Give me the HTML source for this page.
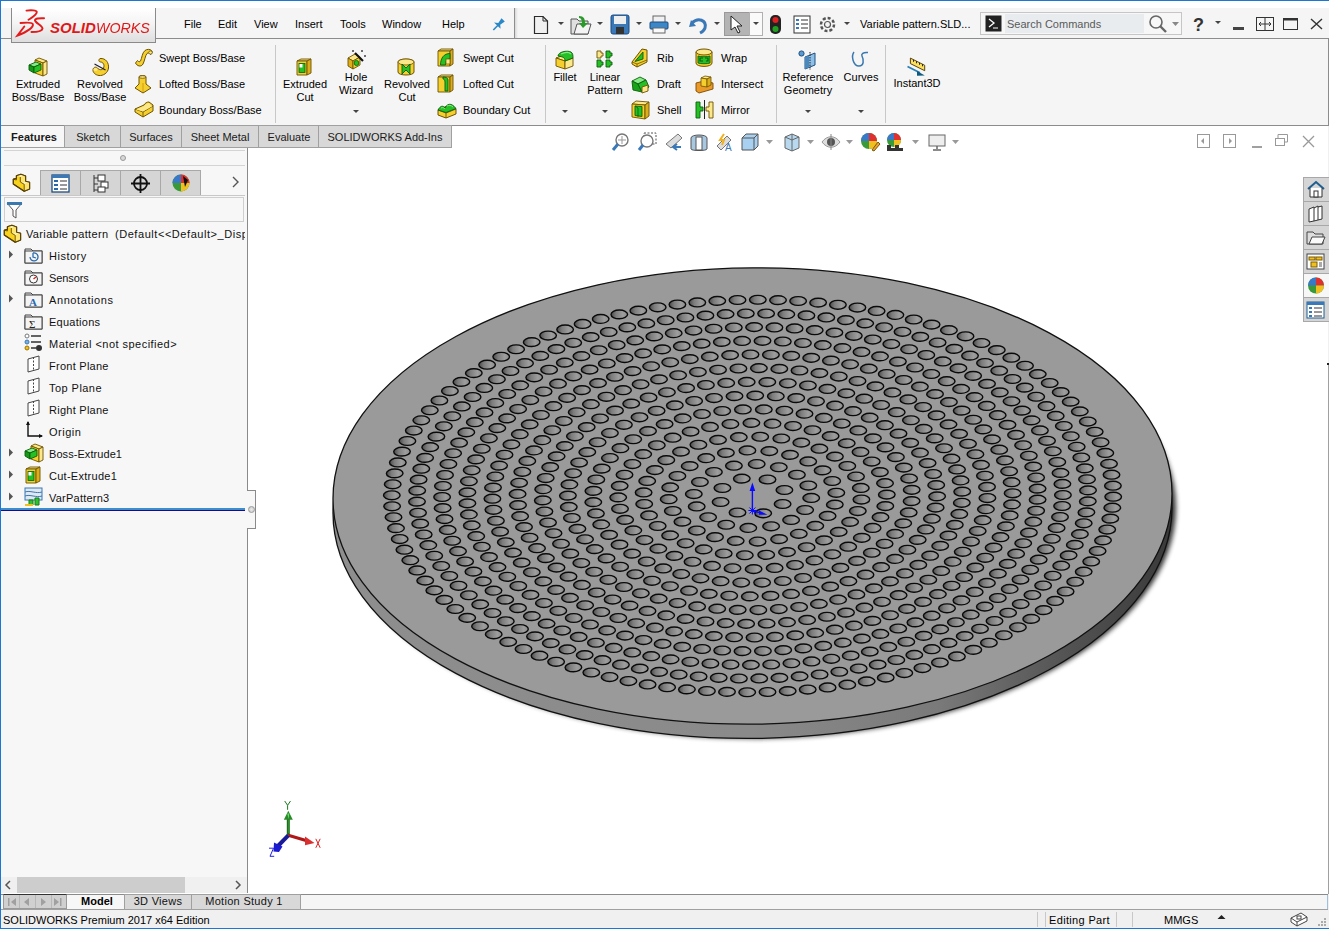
<!DOCTYPE html>
<html><head><meta charset="utf-8"><title>SOLIDWORKS</title>
<style>
html,body{margin:0;padding:0;width:1329px;height:929px;overflow:hidden;background:#f0f0f0}
.b,.t,.s{position:absolute}
.t{font-family:"Liberation Sans", sans-serif;white-space:pre;line-height:1}
.s{overflow:visible}
</style></head><body>
<div class="b" style="left:0px;top:0px;width:1329px;height:929px;background:#f0f0f0"></div><div class="b" style="left:1px;top:1px;width:1328px;height:7px;background:#ffffff"></div><div class="b" style="left:1px;top:8px;width:1328px;height:30px;background:#f5f5f5"></div><div class="b" style="left:1px;top:38px;width:1328px;height:1px;background:#8c8c8c"></div><div class="b" style="left:1px;top:39px;width:1327px;height:86px;background:#f5f5f5"></div><div class="b" style="left:1328px;top:38px;width:1px;height:88px;background:#8c8c8c"></div><div class="b" style="left:1px;top:125px;width:1328px;height:1px;background:#8c8c8c"></div><div class="b" style="left:11px;top:8px;width:145px;height:35px;background:linear-gradient(#ffffff 0%,#f4f4f4 45%,#dedede 100%);border-left:1px solid #8a8a8a;border-right:1px solid #8a8a8a;border-bottom:1px solid #8a8a8a;box-sizing:border-box"></div><div class="b" style="left:0px;top:0px;width:1329px;height:1px;background:#1a78d4"></div><div class="b" style="left:0px;top:0px;width:1px;height:929px;background:#1a78d4"></div><div class="b" style="left:0px;top:928px;width:1329px;height:1px;background:#1a78d4"></div><div class="t" style="left:184px;top:19px;font-size:11px;color:#000;font-weight:normal;letter-spacing:0px">File</div><div class="t" style="left:218px;top:19px;font-size:11px;color:#000;font-weight:normal;letter-spacing:0px">Edit</div><div class="t" style="left:254px;top:19px;font-size:11px;color:#000;font-weight:normal;letter-spacing:0px">View</div><div class="t" style="left:295px;top:19px;font-size:11px;color:#000;font-weight:normal;letter-spacing:0px">Insert</div><div class="t" style="left:340px;top:19px;font-size:11px;color:#000;font-weight:normal;letter-spacing:0px">Tools</div><div class="t" style="left:382px;top:19px;font-size:11px;color:#000;font-weight:normal;letter-spacing:0px">Window</div><div class="t" style="left:442px;top:19px;font-size:11px;color:#000;font-weight:normal;letter-spacing:0px">Help</div><div class="b" style="left:514px;top:8px;width:1px;height:30px;background:#8e8e8e"></div><div class="b" style="left:515px;top:8px;width:3px;height:30px;background:linear-gradient(90deg,#d8d8d8,#f5f5f5)"></div><div class="t" style="left:860px;top:19px;font-size:11px;color:#000;font-weight:normal;letter-spacing:0px">Variable pattern.SLD...</div><div class="b" style="left:980px;top:12px;width:202px;height:23px;background:#f7f7f7;border:1px solid #c6c6c6;box-sizing:border-box"></div><div class="b" style="left:1005px;top:14px;width:139px;height:19px;background:#e9ecef"></div><div class="t" style="left:1007px;top:19px;font-size:11px;color:#5a5a5a;font-weight:normal;letter-spacing:0px">Search Commands</div><div class="b" style="left:1px;top:126px;width:1327px;height:22px;background:#ffffff"></div><div class="b" style="left:1px;top:126px;width:64px;height:21px;background:#f7f7f7"></div><div class="b" style="left:64px;top:125px;width:57px;height:23px;background:#d8d8d8;border:1px solid #a0a0a0;box-sizing:border-box"></div><div class="t" style="left:-57px;top:132px;width:300px;text-align:center;font-size:11px;color:#1a1a1a;font-weight:normal;letter-spacing:0px">Sketch</div><div class="b" style="left:120px;top:125px;width:62px;height:23px;background:#d8d8d8;border:1px solid #a0a0a0;box-sizing:border-box"></div><div class="t" style="left:1px;top:132px;width:300px;text-align:center;font-size:11px;color:#1a1a1a;font-weight:normal;letter-spacing:0px">Surfaces</div><div class="b" style="left:181px;top:125px;width:78px;height:23px;background:#d8d8d8;border:1px solid #a0a0a0;box-sizing:border-box"></div><div class="t" style="left:70px;top:132px;width:300px;text-align:center;font-size:11px;color:#1a1a1a;font-weight:normal;letter-spacing:0px">Sheet Metal</div><div class="b" style="left:258px;top:125px;width:61px;height:23px;background:#d8d8d8;border:1px solid #a0a0a0;box-sizing:border-box"></div><div class="t" style="left:139px;top:132px;width:300px;text-align:center;font-size:11px;color:#1a1a1a;font-weight:normal;letter-spacing:0px">Evaluate</div><div class="b" style="left:318px;top:125px;width:134px;height:23px;background:#d8d8d8;border:1px solid #a0a0a0;box-sizing:border-box"></div><div class="t" style="left:235px;top:132px;width:300px;text-align:center;font-size:11px;color:#1a1a1a;font-weight:normal;letter-spacing:0px">SOLIDWORKS Add-Ins</div><div class="t" style="left:-116px;top:132px;width:300px;text-align:center;font-size:11px;color:#1a1a1a;font-weight:bold;letter-spacing:0px">Features</div><div class="b" style="left:1px;top:147px;width:64px;height:1px;background:#a0a0a0"></div><div class="b" style="left:248px;top:148px;width:1080px;height:746px;background:#ffffff"></div><div class="b" style="left:1328px;top:363px;width:1px;height:531px;background:#a0a0a0"></div><div class="b" style="left:1327px;top:363px;width:2px;height:2px;background:#222"></div><div class="b" style="left:1px;top:148px;width:246px;height:745px;background:#f7f7f7"></div><div class="b" style="left:247px;top:148px;width:1px;height:745px;background:#8a8a8a"></div><div class="b" style="left:4px;top:150px;width:241px;height:1px;background:#d4d4d4"></div><div class="b" style="left:4px;top:165px;width:241px;height:1px;background:#d4d4d4"></div><div class="b" style="left:120px;top:155px;width:6px;height:6px;border-radius:50%;background:#d8d8d8;border:1px solid #9a9a9a;box-sizing:border-box"></div><div class="b" style="left:1px;top:170px;width:40px;height:26px;background:#f7f7f7"></div><div class="b" style="left:40px;top:170px;width:41px;height:26px;background:#d5d5d5;border:1px solid #a8a8a8;box-sizing:border-box"></div><div class="b" style="left:80px;top:170px;width:41px;height:26px;background:#d5d5d5;border:1px solid #a8a8a8;box-sizing:border-box"></div><div class="b" style="left:120px;top:170px;width:41px;height:26px;background:#d5d5d5;border:1px solid #a8a8a8;box-sizing:border-box"></div><div class="b" style="left:160px;top:170px;width:41px;height:26px;background:#d5d5d5;border:1px solid #a8a8a8;box-sizing:border-box"></div><div class="b" style="left:1px;top:195px;width:244px;height:1px;background:#c8c8c8"></div><div class="b" style="left:201px;top:195px;width:44px;height:1px;background:#c8c8c8"></div><svg class="s" style="left:230px;top:175px" width="12" height="14" viewBox="0 0 12 14"><path d="M3 2 L8 7 L3 12" fill="none" stroke="#555" stroke-width="1.4"/></svg><div class="b" style="left:4px;top:197px;width:240px;height:25px;background:#f7f7f7;border:1px solid #cfcfcf;box-sizing:border-box"></div><svg class="s" style="left:6px;top:201px" width="18" height="18" viewBox="0 0 18 18"><path d="M1 2 H16 L10 9 V17 L7 15 V9 Z" fill="#fff" stroke="#555" stroke-width="1"/><rect x="1" y="1" width="15" height="3" fill="#3a78b0"/></svg><div class="t" style="left:26px;top:229px;font-size:11px;color:#111;font-weight:normal;letter-spacing:0.35px">Variable pattern</div><div style="position:absolute;left:115px;top:224px;width:130px;height:20px;overflow:hidden"><div class="t" style="left:0px;top:5px;font-size:11px;color:#111;font-weight:normal;letter-spacing:0.55px">(Default&lt;&lt;Default&gt;_Disp</div></div><div class="t" style="left:49px;top:251px;font-size:11px;color:#111;font-weight:normal;letter-spacing:0.5px">History</div><svg class="s" style="left:8px;top:250px" width="6" height="9" viewBox="0 0 6 9"><path d="M1 0.5 L5 4.5 L1 8.5 Z" fill="#555"/></svg><div class="t" style="left:49px;top:273px;font-size:11px;color:#111;font-weight:normal;letter-spacing:-0.1px">Sensors</div><div class="t" style="left:49px;top:295px;font-size:11px;color:#111;font-weight:normal;letter-spacing:0.59px">Annotations</div><svg class="s" style="left:8px;top:294px" width="6" height="9" viewBox="0 0 6 9"><path d="M1 0.5 L5 4.5 L1 8.5 Z" fill="#555"/></svg><div class="t" style="left:49px;top:317px;font-size:11px;color:#111;font-weight:normal;letter-spacing:0.26px">Equations</div><div class="t" style="left:49px;top:339px;font-size:11px;color:#111;font-weight:normal;letter-spacing:0.47px">Material &lt;not specified&gt;</div><div class="t" style="left:49px;top:361px;font-size:11px;color:#111;font-weight:normal;letter-spacing:0.26px">Front Plane</div><div class="t" style="left:49px;top:383px;font-size:11px;color:#111;font-weight:normal;letter-spacing:0.45px">Top Plane</div><div class="t" style="left:49px;top:405px;font-size:11px;color:#111;font-weight:normal;letter-spacing:0.26px">Right Plane</div><div class="t" style="left:49px;top:427px;font-size:11px;color:#111;font-weight:normal;letter-spacing:0.51px">Origin</div><div class="t" style="left:49px;top:449px;font-size:11px;color:#111;font-weight:normal;letter-spacing:0.07px">Boss-Extrude1</div><svg class="s" style="left:8px;top:448px" width="6" height="9" viewBox="0 0 6 9"><path d="M1 0.5 L5 4.5 L1 8.5 Z" fill="#555"/></svg><div class="t" style="left:49px;top:471px;font-size:11px;color:#111;font-weight:normal;letter-spacing:0.27px">Cut-Extrude1</div><svg class="s" style="left:8px;top:470px" width="6" height="9" viewBox="0 0 6 9"><path d="M1 0.5 L5 4.5 L1 8.5 Z" fill="#555"/></svg><div class="t" style="left:49px;top:493px;font-size:11px;color:#111;font-weight:normal;letter-spacing:0.23px">VarPattern3</div><svg class="s" style="left:8px;top:492px" width="6" height="9" viewBox="0 0 6 9"><path d="M1 0.5 L5 4.5 L1 8.5 Z" fill="#555"/></svg><div class="b" style="left:1px;top:508px;width:244px;height:2px;background:#3a8ed0"></div><div class="b" style="left:1px;top:510px;width:244px;height:1px;background:#1a0a8c"></div><div class="b" style="left:247px;top:490px;width:1px;height:39px;background:#f7f7f7"></div><div class="b" style="left:248px;top:490px;width:8px;height:39px;background:#f7f7f7"></div><div class="b" style="left:247px;top:490px;width:9px;height:1px;background:#8a8a8a"></div><div class="b" style="left:247px;top:528px;width:9px;height:1px;background:#8a8a8a"></div><div class="b" style="left:255px;top:490px;width:1px;height:39px;background:#8a8a8a"></div><div class="b" style="left:248px;top:506px;width:7px;height:7px;border-radius:50%;background:radial-gradient(#e8e8e8,#c8c8c8);border:1px solid #999;box-sizing:border-box"></div><div class="b" style="left:1px;top:877px;width:246px;height:16px;background:#f0f0f0"></div><div class="b" style="left:17px;top:877px;width:168px;height:16px;background:#cdcdcd"></div><svg class="s" style="left:3px;top:879px" width="10" height="12" viewBox="0 0 10 12"><path d="M7 2 L3 6 L7 10" fill="none" stroke="#555" stroke-width="1.5"/></svg><svg class="s" style="left:233px;top:879px" width="10" height="12" viewBox="0 0 10 12"><path d="M3 2 L7 6 L3 10" fill="none" stroke="#555" stroke-width="1.5"/></svg><div class="b" style="left:1px;top:893px;width:1327px;height:1px;background:#ffffff"></div><div class="b" style="left:1px;top:894px;width:1327px;height:15px;background:#f5f5f5"></div><div class="b" style="left:1px;top:894px;width:1327px;height:1px;background:#8a8a8a"></div><div class="b" style="left:1px;top:909px;width:1327px;height:1px;background:#a0a0a0"></div><div class="b" style="left:1327px;top:895px;width:1px;height:14px;background:#9ec0e0"></div><div class="b" style="left:3px;top:894px;width:64px;height:15px;background:#d0d0d0;border:1px solid #9a9a9a;border-top:1px solid #333;box-sizing:border-box"></div><div class="b" style="left:19px;top:895px;width:1px;height:13px;background:#b8b8b8"></div><div class="b" style="left:35px;top:895px;width:1px;height:13px;background:#b8b8b8"></div><div class="b" style="left:51px;top:895px;width:1px;height:13px;background:#b8b8b8"></div><svg class="s" style="left:3px;top:894px" width="64" height="15" viewBox="0 0 64 15"><g fill="#a0a0a0"><rect x="5" y="4" width="1.5" height="8"/><path d="M13 4 L8 8 L13 12 Z"/><path d="M26 4 L21 8 L26 12 Z"/><path d="M38 4 L43 8 L38 12 Z"/><path d="M51 4 L56 8 L51 12 Z"/><rect x="57" y="4" width="1.5" height="8"/></g></svg><div class="b" style="left:67px;top:895px;width:57px;height:14px;background:#f7f7f7"></div><div class="t" style="left:-53px;top:896px;width:300px;text-align:center;font-size:11px;color:#000;font-weight:bold;letter-spacing:0px">Model</div><div class="b" style="left:124px;top:894px;width:68px;height:16px;background:#d8d8d8;border:1px solid #a0a0a0;box-sizing:border-box"></div><div class="t" style="left:8px;top:896px;width:300px;text-align:center;font-size:11px;color:#111;font-weight:normal;letter-spacing:0.3px">3D Views</div><div class="b" style="left:191px;top:894px;width:110px;height:16px;background:#d8d8d8;border:1px solid #a0a0a0;box-sizing:border-box"></div><div class="t" style="left:94px;top:896px;width:300px;text-align:center;font-size:11px;color:#111;font-weight:normal;letter-spacing:0.3px">Motion Study 1</div><div class="b" style="left:1px;top:910px;width:1328px;height:18px;background:#f0f0f0"></div><div class="t" style="left:3px;top:915px;font-size:11px;color:#000;font-weight:normal;letter-spacing:0px">SOLIDWORKS Premium 2017 x64 Edition</div><div class="b" style="left:1037px;top:912px;width:1px;height:15px;background:#c8c8c8"></div><div class="b" style="left:1045px;top:912px;width:1px;height:15px;background:#c8c8c8"></div><div class="b" style="left:1116px;top:912px;width:1px;height:15px;background:#c8c8c8"></div><div class="b" style="left:1132px;top:912px;width:1px;height:15px;background:#c8c8c8"></div><div class="t" style="left:1049px;top:915px;font-size:11px;color:#000;font-weight:normal;letter-spacing:0.34px">Editing Part</div><div class="t" style="left:1164px;top:915px;font-size:11px;color:#000;font-weight:normal;letter-spacing:0px">MMGS</div><svg class="s" style="left:1217px;top:914px" width="9" height="6" viewBox="0 0 9 6"><path d="M0.5 5 L4.5 1 L8.5 5 Z" fill="#222"/></svg><svg class="s" style="left:0;top:0" width="1329" height="929" viewBox="0 0 1329 929"><g transform="matrix(1,-0.0061,0,1,0,4.590)"><defs><linearGradient id="side" x1="0" x2="1" y1="0" y2="0"><stop offset="0" stop-color="#8e8e8e"/><stop offset="0.5" stop-color="#8a8a8a"/><stop offset="0.72" stop-color="#7a7a7a"/><stop offset="0.88" stop-color="#525252"/><stop offset="1" stop-color="#3a3a3a"/></linearGradient><linearGradient id="hg" x1="0" x2="1" y1="0" y2="0"><stop offset="0" stop-color="#484848"/><stop offset="0.3" stop-color="#7c7c7c"/><stop offset="0.72" stop-color="#9e9e9e"/><stop offset="1" stop-color="#8a8a8a"/></linearGradient><filter id="blur" x="-10%" y="-10%" width="120%" height="120%"><feGaussianBlur stdDeviation="2.5"/></filter><ellipse id="h" cx="0" cy="0" rx="8.3" ry="4.4" fill="url(#hg)" stroke="#0a0a0a" stroke-width="1.4"/></defs><ellipse cx="756.5" cy="510.2" rx="419.5" ry="228.2" fill="#000" opacity="0.8" filter="url(#blur)"/><ellipse cx="752.5" cy="510.2" rx="419.5" ry="228.2" fill="url(#side)" stroke="#111" stroke-width="1.3"/><ellipse cx="752.5" cy="496.0" rx="419.5" ry="228.2" fill="#9a9a9a" stroke="#111" stroke-width="1.3"/><use href="#h" x="782.6" y="504.2"/><use href="#h" x="763.2" y="513.4"/><use href="#h" x="737.5" y="512.4"/><use href="#h" x="720.6" y="501.8"/><use href="#h" x="722.4" y="487.8"/><use href="#h" x="741.8" y="478.6"/><use href="#h" x="767.5" y="479.6"/><use href="#h" x="784.4" y="490.2"/><use href="#h" x="805.1" y="510.3"/><use href="#h" x="791.1" y="520.2"/><use href="#h" x="771.1" y="526.4"/><use href="#h" x="748.3" y="527.9"/><use href="#h" x="726.2" y="524.6"/><use href="#h" x="708.1" y="517.0"/><use href="#h" x="696.7" y="506.1"/><use href="#h" x="693.8" y="493.7"/><use href="#h" x="699.9" y="481.7"/><use href="#h" x="713.9" y="471.8"/><use href="#h" x="733.9" y="465.6"/><use href="#h" x="756.7" y="464.1"/><use href="#h" x="778.8" y="467.4"/><use href="#h" x="796.9" y="475.0"/><use href="#h" x="808.3" y="485.9"/><use href="#h" x="811.2" y="498.3"/><use href="#h" x="827.6" y="516.4"/><use href="#h" x="815.3" y="526.3"/><use href="#h" x="798.8" y="534.1"/><use href="#h" x="779.1" y="539.3"/><use href="#h" x="757.6" y="541.6"/><use href="#h" x="735.7" y="540.8"/><use href="#h" x="715.0" y="536.9"/><use href="#h" x="696.8" y="530.2"/><use href="#h" x="682.4" y="521.2"/><use href="#h" x="672.8" y="510.5"/><use href="#h" x="668.7" y="498.7"/><use href="#h" x="670.2" y="486.9"/><use href="#h" x="677.4" y="475.6"/><use href="#h" x="689.7" y="465.7"/><use href="#h" x="706.2" y="457.9"/><use href="#h" x="725.9" y="452.7"/><use href="#h" x="747.4" y="450.4"/><use href="#h" x="769.3" y="451.2"/><use href="#h" x="790.0" y="455.1"/><use href="#h" x="808.2" y="461.8"/><use href="#h" x="822.6" y="470.8"/><use href="#h" x="832.2" y="481.5"/><use href="#h" x="836.3" y="493.3"/><use href="#h" x="834.8" y="505.1"/><use href="#h" x="850.1" y="522.5"/><use href="#h" x="838.7" y="532.4"/><use href="#h" x="824.0" y="540.8"/><use href="#h" x="806.6" y="547.6"/><use href="#h" x="787.0" y="552.3"/><use href="#h" x="766.2" y="554.9"/><use href="#h" x="744.8" y="555.2"/><use href="#h" x="723.7" y="553.3"/><use href="#h" x="703.7" y="549.1"/><use href="#h" x="685.6" y="542.9"/><use href="#h" x="670.1" y="534.9"/><use href="#h" x="657.7" y="525.4"/><use href="#h" x="649.0" y="514.8"/><use href="#h" x="644.2" y="503.4"/><use href="#h" x="643.6" y="491.8"/><use href="#h" x="647.2" y="480.3"/><use href="#h" x="654.9" y="469.5"/><use href="#h" x="666.3" y="459.6"/><use href="#h" x="681.0" y="451.2"/><use href="#h" x="698.4" y="444.4"/><use href="#h" x="718.0" y="439.7"/><use href="#h" x="738.8" y="437.1"/><use href="#h" x="760.2" y="436.8"/><use href="#h" x="781.3" y="438.7"/><use href="#h" x="801.3" y="442.9"/><use href="#h" x="819.4" y="449.1"/><use href="#h" x="834.9" y="457.1"/><use href="#h" x="847.3" y="466.6"/><use href="#h" x="856.0" y="477.2"/><use href="#h" x="860.8" y="488.6"/><use href="#h" x="861.4" y="500.2"/><use href="#h" x="857.8" y="511.7"/><use href="#h" x="872.6" y="528.7"/><use href="#h" x="861.8" y="538.5"/><use href="#h" x="848.2" y="547.3"/><use href="#h" x="832.3" y="554.8"/><use href="#h" x="814.4" y="560.8"/><use href="#h" x="795.0" y="565.3"/><use href="#h" x="774.6" y="568.1"/><use href="#h" x="753.6" y="569.1"/><use href="#h" x="732.5" y="568.2"/><use href="#h" x="712.0" y="565.7"/><use href="#h" x="692.5" y="561.4"/><use href="#h" x="674.4" y="555.4"/><use href="#h" x="658.3" y="548.1"/><use href="#h" x="644.5" y="539.4"/><use href="#h" x="633.3" y="529.7"/><use href="#h" x="625.1" y="519.1"/><use href="#h" x="620.0" y="508.0"/><use href="#h" x="618.2" y="496.6"/><use href="#h" x="619.7" y="485.1"/><use href="#h" x="624.5" y="474.0"/><use href="#h" x="632.4" y="463.3"/><use href="#h" x="643.2" y="453.5"/><use href="#h" x="656.8" y="444.7"/><use href="#h" x="672.7" y="437.2"/><use href="#h" x="690.6" y="431.2"/><use href="#h" x="710.0" y="426.7"/><use href="#h" x="730.4" y="423.9"/><use href="#h" x="751.4" y="422.9"/><use href="#h" x="772.5" y="423.8"/><use href="#h" x="793.0" y="426.3"/><use href="#h" x="812.5" y="430.6"/><use href="#h" x="830.6" y="436.6"/><use href="#h" x="846.7" y="443.9"/><use href="#h" x="860.5" y="452.6"/><use href="#h" x="871.7" y="462.3"/><use href="#h" x="879.9" y="472.9"/><use href="#h" x="885.0" y="484.0"/><use href="#h" x="886.8" y="495.4"/><use href="#h" x="885.3" y="506.9"/><use href="#h" x="880.5" y="518.0"/><use href="#h" x="895.1" y="534.8"/><use href="#h" x="884.6" y="544.6"/><use href="#h" x="871.8" y="553.5"/><use href="#h" x="857.0" y="561.5"/><use href="#h" x="840.4" y="568.4"/><use href="#h" x="822.3" y="574.0"/><use href="#h" x="803.0" y="578.3"/><use href="#h" x="782.8" y="581.2"/><use href="#h" x="762.1" y="582.6"/><use href="#h" x="741.2" y="582.5"/><use href="#h" x="720.6" y="581.0"/><use href="#h" x="700.5" y="578.0"/><use href="#h" x="681.2" y="573.6"/><use href="#h" x="663.2" y="567.9"/><use href="#h" x="646.7" y="560.9"/><use href="#h" x="632.1" y="552.9"/><use href="#h" x="619.5" y="543.8"/><use href="#h" x="609.1" y="534.0"/><use href="#h" x="601.2" y="523.5"/><use href="#h" x="595.9" y="512.5"/><use href="#h" x="593.3" y="501.2"/><use href="#h" x="593.4" y="489.9"/><use href="#h" x="596.3" y="478.6"/><use href="#h" x="601.8" y="467.7"/><use href="#h" x="609.9" y="457.2"/><use href="#h" x="620.4" y="447.4"/><use href="#h" x="633.2" y="438.5"/><use href="#h" x="648.0" y="430.5"/><use href="#h" x="664.6" y="423.6"/><use href="#h" x="682.7" y="418.0"/><use href="#h" x="702.0" y="413.7"/><use href="#h" x="722.2" y="410.8"/><use href="#h" x="742.9" y="409.4"/><use href="#h" x="763.8" y="409.5"/><use href="#h" x="784.4" y="411.0"/><use href="#h" x="804.5" y="414.0"/><use href="#h" x="823.8" y="418.4"/><use href="#h" x="841.8" y="424.1"/><use href="#h" x="858.3" y="431.1"/><use href="#h" x="872.9" y="439.1"/><use href="#h" x="885.5" y="448.2"/><use href="#h" x="895.9" y="458.0"/><use href="#h" x="903.8" y="468.5"/><use href="#h" x="909.1" y="479.5"/><use href="#h" x="911.7" y="490.8"/><use href="#h" x="911.6" y="502.1"/><use href="#h" x="908.7" y="513.4"/><use href="#h" x="903.2" y="524.3"/><use href="#h" x="917.7" y="540.9"/><use href="#h" x="907.4" y="550.7"/><use href="#h" x="895.1" y="559.8"/><use href="#h" x="881.1" y="568.0"/><use href="#h" x="865.5" y="575.4"/><use href="#h" x="848.4" y="581.8"/><use href="#h" x="830.2" y="587.1"/><use href="#h" x="810.9" y="591.3"/><use href="#h" x="791.0" y="594.2"/><use href="#h" x="770.5" y="596.0"/><use href="#h" x="749.8" y="596.4"/><use href="#h" x="729.2" y="595.6"/><use href="#h" x="708.8" y="593.6"/><use href="#h" x="689.0" y="590.3"/><use href="#h" x="670.0" y="585.8"/><use href="#h" x="652.0" y="580.2"/><use href="#h" x="635.3" y="573.6"/><use href="#h" x="620.1" y="566.0"/><use href="#h" x="606.5" y="557.5"/><use href="#h" x="594.8" y="548.2"/><use href="#h" x="585.0" y="538.3"/><use href="#h" x="577.4" y="527.8"/><use href="#h" x="571.9" y="516.9"/><use href="#h" x="568.8" y="505.8"/><use href="#h" x="567.9" y="494.5"/><use href="#h" x="569.4" y="483.3"/><use href="#h" x="573.1" y="472.2"/><use href="#h" x="579.1" y="461.5"/><use href="#h" x="587.3" y="451.1"/><use href="#h" x="597.6" y="441.3"/><use href="#h" x="609.9" y="432.2"/><use href="#h" x="623.9" y="424.0"/><use href="#h" x="639.5" y="416.6"/><use href="#h" x="656.6" y="410.2"/><use href="#h" x="674.8" y="404.9"/><use href="#h" x="694.1" y="400.7"/><use href="#h" x="714.0" y="397.8"/><use href="#h" x="734.5" y="396.0"/><use href="#h" x="755.2" y="395.6"/><use href="#h" x="775.8" y="396.4"/><use href="#h" x="796.2" y="398.4"/><use href="#h" x="816.0" y="401.7"/><use href="#h" x="835.0" y="406.2"/><use href="#h" x="853.0" y="411.8"/><use href="#h" x="869.7" y="418.4"/><use href="#h" x="884.9" y="426.0"/><use href="#h" x="898.5" y="434.5"/><use href="#h" x="910.2" y="443.8"/><use href="#h" x="920.0" y="453.7"/><use href="#h" x="927.6" y="464.2"/><use href="#h" x="933.1" y="475.1"/><use href="#h" x="936.2" y="486.2"/><use href="#h" x="937.1" y="497.5"/><use href="#h" x="935.6" y="508.7"/><use href="#h" x="931.9" y="519.8"/><use href="#h" x="925.9" y="530.5"/><use href="#h" x="940.2" y="547.0"/><use href="#h" x="930.1" y="556.8"/><use href="#h" x="918.3" y="565.9"/><use href="#h" x="904.9" y="574.4"/><use href="#h" x="890.0" y="582.2"/><use href="#h" x="873.8" y="589.1"/><use href="#h" x="856.4" y="595.1"/><use href="#h" x="838.1" y="600.2"/><use href="#h" x="818.9" y="604.3"/><use href="#h" x="799.1" y="607.3"/><use href="#h" x="778.8" y="609.2"/><use href="#h" x="758.3" y="610.1"/><use href="#h" x="737.7" y="609.8"/><use href="#h" x="717.2" y="608.5"/><use href="#h" x="697.1" y="606.1"/><use href="#h" x="677.6" y="602.6"/><use href="#h" x="658.7" y="598.1"/><use href="#h" x="640.8" y="592.6"/><use href="#h" x="623.9" y="586.2"/><use href="#h" x="608.3" y="578.9"/><use href="#h" x="594.1" y="570.8"/><use href="#h" x="581.3" y="562.0"/><use href="#h" x="570.3" y="552.5"/><use href="#h" x="561.0" y="542.6"/><use href="#h" x="553.5" y="532.1"/><use href="#h" x="548.0" y="521.3"/><use href="#h" x="544.4" y="510.3"/><use href="#h" x="542.8" y="499.1"/><use href="#h" x="543.2" y="487.9"/><use href="#h" x="545.7" y="476.8"/><use href="#h" x="550.2" y="465.9"/><use href="#h" x="556.6" y="455.2"/><use href="#h" x="564.8" y="445.0"/><use href="#h" x="574.9" y="435.2"/><use href="#h" x="586.7" y="426.1"/><use href="#h" x="600.1" y="417.6"/><use href="#h" x="615.0" y="409.8"/><use href="#h" x="631.2" y="402.9"/><use href="#h" x="648.6" y="396.9"/><use href="#h" x="666.9" y="391.8"/><use href="#h" x="686.1" y="387.7"/><use href="#h" x="705.9" y="384.7"/><use href="#h" x="726.2" y="382.8"/><use href="#h" x="746.7" y="381.9"/><use href="#h" x="767.3" y="382.2"/><use href="#h" x="787.8" y="383.5"/><use href="#h" x="807.9" y="385.9"/><use href="#h" x="827.4" y="389.4"/><use href="#h" x="846.3" y="393.9"/><use href="#h" x="864.2" y="399.4"/><use href="#h" x="881.1" y="405.8"/><use href="#h" x="896.7" y="413.1"/><use href="#h" x="910.9" y="421.2"/><use href="#h" x="923.7" y="430.0"/><use href="#h" x="934.7" y="439.5"/><use href="#h" x="944.0" y="449.4"/><use href="#h" x="951.5" y="459.9"/><use href="#h" x="957.0" y="470.7"/><use href="#h" x="960.6" y="481.7"/><use href="#h" x="962.2" y="492.9"/><use href="#h" x="961.8" y="504.1"/><use href="#h" x="959.3" y="515.2"/><use href="#h" x="954.8" y="526.1"/><use href="#h" x="948.4" y="536.8"/><use href="#h" x="962.7" y="553.1"/><use href="#h" x="952.7" y="562.9"/><use href="#h" x="941.2" y="572.1"/><use href="#h" x="928.3" y="580.8"/><use href="#h" x="914.1" y="588.8"/><use href="#h" x="898.6" y="596.1"/><use href="#h" x="882.0" y="602.6"/><use href="#h" x="864.4" y="608.4"/><use href="#h" x="846.0" y="613.2"/><use href="#h" x="826.9" y="617.2"/><use href="#h" x="807.1" y="620.3"/><use href="#h" x="787.0" y="622.4"/><use href="#h" x="766.6" y="623.6"/><use href="#h" x="746.1" y="623.8"/><use href="#h" x="725.7" y="623.0"/><use href="#h" x="705.5" y="621.2"/><use href="#h" x="685.6" y="618.5"/><use href="#h" x="666.2" y="614.9"/><use href="#h" x="647.5" y="610.3"/><use href="#h" x="629.6" y="604.9"/><use href="#h" x="612.6" y="598.7"/><use href="#h" x="596.7" y="591.6"/><use href="#h" x="581.9" y="583.9"/><use href="#h" x="568.5" y="575.5"/><use href="#h" x="556.5" y="566.4"/><use href="#h" x="545.9" y="556.9"/><use href="#h" x="537.0" y="546.9"/><use href="#h" x="529.6" y="536.4"/><use href="#h" x="524.0" y="525.7"/><use href="#h" x="520.1" y="514.8"/><use href="#h" x="518.0" y="503.7"/><use href="#h" x="517.6" y="492.5"/><use href="#h" x="519.1" y="481.4"/><use href="#h" x="522.3" y="470.4"/><use href="#h" x="527.3" y="459.6"/><use href="#h" x="534.0" y="449.1"/><use href="#h" x="542.3" y="438.9"/><use href="#h" x="552.3" y="429.1"/><use href="#h" x="563.8" y="419.9"/><use href="#h" x="576.7" y="411.2"/><use href="#h" x="590.9" y="403.2"/><use href="#h" x="606.4" y="395.9"/><use href="#h" x="623.0" y="389.4"/><use href="#h" x="640.6" y="383.6"/><use href="#h" x="659.0" y="378.8"/><use href="#h" x="678.1" y="374.8"/><use href="#h" x="697.9" y="371.7"/><use href="#h" x="718.0" y="369.6"/><use href="#h" x="738.4" y="368.4"/><use href="#h" x="758.9" y="368.2"/><use href="#h" x="779.3" y="369.0"/><use href="#h" x="799.5" y="370.8"/><use href="#h" x="819.4" y="373.5"/><use href="#h" x="838.8" y="377.1"/><use href="#h" x="857.5" y="381.7"/><use href="#h" x="875.4" y="387.1"/><use href="#h" x="892.4" y="393.3"/><use href="#h" x="908.3" y="400.4"/><use href="#h" x="923.1" y="408.1"/><use href="#h" x="936.5" y="416.5"/><use href="#h" x="948.5" y="425.6"/><use href="#h" x="959.1" y="435.1"/><use href="#h" x="968.0" y="445.1"/><use href="#h" x="975.4" y="455.6"/><use href="#h" x="981.0" y="466.3"/><use href="#h" x="984.9" y="477.2"/><use href="#h" x="987.0" y="488.3"/><use href="#h" x="987.4" y="499.5"/><use href="#h" x="985.9" y="510.6"/><use href="#h" x="982.7" y="521.6"/><use href="#h" x="977.7" y="532.4"/><use href="#h" x="971.0" y="542.9"/><use href="#h" x="985.2" y="559.2"/><use href="#h" x="975.3" y="569.0"/><use href="#h" x="964.1" y="578.3"/><use href="#h" x="951.6" y="587.0"/><use href="#h" x="937.9" y="595.3"/><use href="#h" x="923.0" y="602.9"/><use href="#h" x="907.0" y="609.8"/><use href="#h" x="890.1" y="616.1"/><use href="#h" x="872.4" y="621.6"/><use href="#h" x="853.9" y="626.3"/><use href="#h" x="834.8" y="630.2"/><use href="#h" x="815.2" y="633.3"/><use href="#h" x="795.2" y="635.6"/><use href="#h" x="774.9" y="637.0"/><use href="#h" x="754.5" y="637.5"/><use href="#h" x="734.1" y="637.1"/><use href="#h" x="713.8" y="635.9"/><use href="#h" x="693.8" y="633.8"/><use href="#h" x="674.1" y="630.9"/><use href="#h" x="654.9" y="627.1"/><use href="#h" x="636.2" y="622.6"/><use href="#h" x="618.3" y="617.2"/><use href="#h" x="601.3" y="611.1"/><use href="#h" x="585.1" y="604.3"/><use href="#h" x="570.0" y="596.8"/><use href="#h" x="556.1" y="588.7"/><use href="#h" x="543.3" y="580.1"/><use href="#h" x="531.8" y="570.9"/><use href="#h" x="521.7" y="561.2"/><use href="#h" x="513.0" y="551.2"/><use href="#h" x="505.8" y="540.8"/><use href="#h" x="500.1" y="530.1"/><use href="#h" x="495.9" y="519.2"/><use href="#h" x="493.4" y="508.2"/><use href="#h" x="492.4" y="497.1"/><use href="#h" x="493.0" y="486.0"/><use href="#h" x="495.3" y="475.0"/><use href="#h" x="499.1" y="464.1"/><use href="#h" x="504.5" y="453.3"/><use href="#h" x="511.4" y="442.9"/><use href="#h" x="519.8" y="432.8"/><use href="#h" x="529.7" y="423.0"/><use href="#h" x="540.9" y="413.7"/><use href="#h" x="553.4" y="405.0"/><use href="#h" x="567.1" y="396.7"/><use href="#h" x="582.0" y="389.1"/><use href="#h" x="598.0" y="382.2"/><use href="#h" x="614.9" y="375.9"/><use href="#h" x="632.6" y="370.4"/><use href="#h" x="651.1" y="365.7"/><use href="#h" x="670.2" y="361.8"/><use href="#h" x="689.8" y="358.7"/><use href="#h" x="709.8" y="356.4"/><use href="#h" x="730.1" y="355.0"/><use href="#h" x="750.5" y="354.5"/><use href="#h" x="770.9" y="354.9"/><use href="#h" x="791.2" y="356.1"/><use href="#h" x="811.2" y="358.2"/><use href="#h" x="830.9" y="361.1"/><use href="#h" x="850.1" y="364.9"/><use href="#h" x="868.8" y="369.4"/><use href="#h" x="886.7" y="374.8"/><use href="#h" x="903.7" y="380.9"/><use href="#h" x="919.9" y="387.7"/><use href="#h" x="935.0" y="395.2"/><use href="#h" x="948.9" y="403.3"/><use href="#h" x="961.7" y="411.9"/><use href="#h" x="973.2" y="421.1"/><use href="#h" x="983.3" y="430.8"/><use href="#h" x="992.0" y="440.8"/><use href="#h" x="999.2" y="451.2"/><use href="#h" x="1004.9" y="461.9"/><use href="#h" x="1009.1" y="472.8"/><use href="#h" x="1011.6" y="483.8"/><use href="#h" x="1012.6" y="494.9"/><use href="#h" x="1012.0" y="506.0"/><use href="#h" x="1009.7" y="517.0"/><use href="#h" x="1005.9" y="527.9"/><use href="#h" x="1000.5" y="538.7"/><use href="#h" x="993.6" y="549.1"/><use href="#h" x="1007.7" y="565.4"/><use href="#h" x="997.9" y="575.1"/><use href="#h" x="986.9" y="584.4"/><use href="#h" x="974.7" y="593.3"/><use href="#h" x="961.4" y="601.7"/><use href="#h" x="947.0" y="609.5"/><use href="#h" x="931.7" y="616.8"/><use href="#h" x="915.4" y="623.4"/><use href="#h" x="898.2" y="629.4"/><use href="#h" x="880.4" y="634.7"/><use href="#h" x="861.9" y="639.3"/><use href="#h" x="842.8" y="643.2"/><use href="#h" x="823.2" y="646.3"/><use href="#h" x="803.3" y="648.7"/><use href="#h" x="783.2" y="650.3"/><use href="#h" x="762.9" y="651.1"/><use href="#h" x="742.5" y="651.1"/><use href="#h" x="722.2" y="650.3"/><use href="#h" x="702.1" y="648.7"/><use href="#h" x="682.2" y="646.4"/><use href="#h" x="662.6" y="643.3"/><use href="#h" x="643.5" y="639.4"/><use href="#h" x="625.0" y="634.8"/><use href="#h" x="607.1" y="629.5"/><use href="#h" x="590.0" y="623.5"/><use href="#h" x="573.7" y="616.9"/><use href="#h" x="558.3" y="609.6"/><use href="#h" x="543.9" y="601.8"/><use href="#h" x="530.5" y="593.5"/><use href="#h" x="518.3" y="584.6"/><use href="#h" x="507.3" y="575.3"/><use href="#h" x="497.5" y="565.6"/><use href="#h" x="489.0" y="555.5"/><use href="#h" x="481.9" y="545.1"/><use href="#h" x="476.2" y="534.5"/><use href="#h" x="471.8" y="523.7"/><use href="#h" x="468.9" y="512.7"/><use href="#h" x="467.4" y="501.6"/><use href="#h" x="467.4" y="490.6"/><use href="#h" x="468.9" y="479.5"/><use href="#h" x="471.7" y="468.6"/><use href="#h" x="476.1" y="457.7"/><use href="#h" x="481.8" y="447.1"/><use href="#h" x="488.9" y="436.7"/><use href="#h" x="497.3" y="426.6"/><use href="#h" x="507.1" y="416.9"/><use href="#h" x="518.1" y="407.6"/><use href="#h" x="530.3" y="398.7"/><use href="#h" x="543.6" y="390.3"/><use href="#h" x="558.0" y="382.5"/><use href="#h" x="573.3" y="375.2"/><use href="#h" x="589.6" y="368.6"/><use href="#h" x="606.8" y="362.6"/><use href="#h" x="624.6" y="357.3"/><use href="#h" x="643.1" y="352.7"/><use href="#h" x="662.2" y="348.8"/><use href="#h" x="681.8" y="345.7"/><use href="#h" x="701.7" y="343.3"/><use href="#h" x="721.8" y="341.7"/><use href="#h" x="742.1" y="340.9"/><use href="#h" x="762.5" y="340.9"/><use href="#h" x="782.8" y="341.7"/><use href="#h" x="802.9" y="343.3"/><use href="#h" x="822.8" y="345.6"/><use href="#h" x="842.4" y="348.7"/><use href="#h" x="861.5" y="352.6"/><use href="#h" x="880.0" y="357.2"/><use href="#h" x="897.9" y="362.5"/><use href="#h" x="915.0" y="368.5"/><use href="#h" x="931.3" y="375.1"/><use href="#h" x="946.7" y="382.4"/><use href="#h" x="961.1" y="390.2"/><use href="#h" x="974.5" y="398.5"/><use href="#h" x="986.7" y="407.4"/><use href="#h" x="997.7" y="416.7"/><use href="#h" x="1007.5" y="426.4"/><use href="#h" x="1016.0" y="436.5"/><use href="#h" x="1023.1" y="446.9"/><use href="#h" x="1028.8" y="457.5"/><use href="#h" x="1033.2" y="468.3"/><use href="#h" x="1036.1" y="479.3"/><use href="#h" x="1037.6" y="490.4"/><use href="#h" x="1037.6" y="501.4"/><use href="#h" x="1036.1" y="512.5"/><use href="#h" x="1033.3" y="523.4"/><use href="#h" x="1028.9" y="534.3"/><use href="#h" x="1023.2" y="544.9"/><use href="#h" x="1016.1" y="555.3"/><use href="#h" x="1030.2" y="571.5"/><use href="#h" x="1020.5" y="581.2"/><use href="#h" x="1009.7" y="590.5"/><use href="#h" x="997.8" y="599.5"/><use href="#h" x="984.8" y="608.0"/><use href="#h" x="970.8" y="616.0"/><use href="#h" x="955.9" y="623.5"/><use href="#h" x="940.2" y="630.5"/><use href="#h" x="923.6" y="636.9"/><use href="#h" x="906.3" y="642.7"/><use href="#h" x="888.3" y="647.8"/><use href="#h" x="869.8" y="652.3"/><use href="#h" x="850.7" y="656.2"/><use href="#h" x="831.3" y="659.3"/><use href="#h" x="811.5" y="661.8"/><use href="#h" x="791.4" y="663.5"/><use href="#h" x="771.2" y="664.6"/><use href="#h" x="750.9" y="664.9"/><use href="#h" x="730.6" y="664.4"/><use href="#h" x="710.4" y="663.3"/><use href="#h" x="690.3" y="661.4"/><use href="#h" x="670.6" y="658.9"/><use href="#h" x="651.2" y="655.6"/><use href="#h" x="632.2" y="651.7"/><use href="#h" x="613.7" y="647.1"/><use href="#h" x="595.9" y="641.8"/><use href="#h" x="578.7" y="635.9"/><use href="#h" x="562.2" y="629.4"/><use href="#h" x="546.6" y="622.4"/><use href="#h" x="531.9" y="614.8"/><use href="#h" x="518.0" y="606.7"/><use href="#h" x="505.2" y="598.1"/><use href="#h" x="493.5" y="589.1"/><use href="#h" x="482.9" y="579.7"/><use href="#h" x="473.4" y="569.9"/><use href="#h" x="465.1" y="559.8"/><use href="#h" x="458.0" y="549.4"/><use href="#h" x="452.2" y="538.9"/><use href="#h" x="447.7" y="528.1"/><use href="#h" x="444.5" y="517.2"/><use href="#h" x="442.6" y="506.2"/><use href="#h" x="442.1" y="495.1"/><use href="#h" x="442.9" y="484.1"/><use href="#h" x="445.0" y="473.1"/><use href="#h" x="448.4" y="462.2"/><use href="#h" x="453.1" y="451.4"/><use href="#h" x="459.1" y="440.9"/><use href="#h" x="466.3" y="430.6"/><use href="#h" x="474.8" y="420.5"/><use href="#h" x="484.5" y="410.8"/><use href="#h" x="495.3" y="401.5"/><use href="#h" x="507.2" y="392.5"/><use href="#h" x="520.2" y="384.0"/><use href="#h" x="534.2" y="376.0"/><use href="#h" x="549.1" y="368.5"/><use href="#h" x="564.8" y="361.5"/><use href="#h" x="581.4" y="355.1"/><use href="#h" x="598.7" y="349.3"/><use href="#h" x="616.7" y="344.2"/><use href="#h" x="635.2" y="339.7"/><use href="#h" x="654.3" y="335.8"/><use href="#h" x="673.7" y="332.7"/><use href="#h" x="693.5" y="330.2"/><use href="#h" x="713.6" y="328.5"/><use href="#h" x="733.8" y="327.4"/><use href="#h" x="754.1" y="327.1"/><use href="#h" x="774.4" y="327.6"/><use href="#h" x="794.6" y="328.7"/><use href="#h" x="814.7" y="330.6"/><use href="#h" x="834.4" y="333.1"/><use href="#h" x="853.8" y="336.4"/><use href="#h" x="872.8" y="340.3"/><use href="#h" x="891.3" y="344.9"/><use href="#h" x="909.1" y="350.2"/><use href="#h" x="926.3" y="356.1"/><use href="#h" x="942.8" y="362.6"/><use href="#h" x="958.4" y="369.6"/><use href="#h" x="973.1" y="377.2"/><use href="#h" x="987.0" y="385.3"/><use href="#h" x="999.8" y="393.9"/><use href="#h" x="1011.5" y="402.9"/><use href="#h" x="1022.1" y="412.3"/><use href="#h" x="1031.6" y="422.1"/><use href="#h" x="1039.9" y="432.2"/><use href="#h" x="1047.0" y="442.6"/><use href="#h" x="1052.8" y="453.1"/><use href="#h" x="1057.3" y="463.9"/><use href="#h" x="1060.5" y="474.8"/><use href="#h" x="1062.4" y="485.8"/><use href="#h" x="1062.9" y="496.9"/><use href="#h" x="1062.1" y="507.9"/><use href="#h" x="1060.0" y="518.9"/><use href="#h" x="1056.6" y="529.8"/><use href="#h" x="1051.9" y="540.6"/><use href="#h" x="1045.9" y="551.1"/><use href="#h" x="1038.7" y="561.4"/><use href="#h" x="1052.7" y="577.6"/><use href="#h" x="1043.1" y="587.3"/><use href="#h" x="1032.4" y="596.7"/><use href="#h" x="1020.7" y="605.7"/><use href="#h" x="1008.1" y="614.3"/><use href="#h" x="994.5" y="622.5"/><use href="#h" x="980.0" y="630.2"/><use href="#h" x="964.7" y="637.4"/><use href="#h" x="948.6" y="644.1"/><use href="#h" x="931.8" y="650.3"/><use href="#h" x="914.3" y="655.9"/><use href="#h" x="896.3" y="660.9"/><use href="#h" x="877.7" y="665.4"/><use href="#h" x="858.7" y="669.2"/><use href="#h" x="839.3" y="672.3"/><use href="#h" x="819.6" y="674.9"/><use href="#h" x="799.6" y="676.7"/><use href="#h" x="779.4" y="678.0"/><use href="#h" x="759.2" y="678.5"/><use href="#h" x="738.9" y="678.4"/><use href="#h" x="718.7" y="677.6"/><use href="#h" x="698.6" y="676.2"/><use href="#h" x="678.7" y="674.1"/><use href="#h" x="659.1" y="671.3"/><use href="#h" x="639.8" y="667.9"/><use href="#h" x="620.9" y="663.9"/><use href="#h" x="602.5" y="659.3"/><use href="#h" x="584.7" y="654.1"/><use href="#h" x="567.4" y="648.3"/><use href="#h" x="550.8" y="641.9"/><use href="#h" x="535.0" y="635.0"/><use href="#h" x="520.0" y="627.6"/><use href="#h" x="505.8" y="619.8"/><use href="#h" x="492.5" y="611.4"/><use href="#h" x="480.2" y="602.7"/><use href="#h" x="468.8" y="593.5"/><use href="#h" x="458.5" y="584.0"/><use href="#h" x="449.3" y="574.2"/><use href="#h" x="441.2" y="564.1"/><use href="#h" x="434.2" y="553.8"/><use href="#h" x="428.3" y="543.2"/><use href="#h" x="423.7" y="532.5"/><use href="#h" x="420.2" y="521.6"/><use href="#h" x="418.0" y="510.7"/><use href="#h" x="417.0" y="499.6"/><use href="#h" x="417.2" y="488.6"/><use href="#h" x="418.6" y="477.6"/><use href="#h" x="421.3" y="466.7"/><use href="#h" x="425.1" y="455.9"/><use href="#h" x="430.2" y="445.2"/><use href="#h" x="436.4" y="434.7"/><use href="#h" x="443.8" y="424.4"/><use href="#h" x="452.3" y="414.4"/><use href="#h" x="461.9" y="404.7"/><use href="#h" x="472.6" y="395.3"/><use href="#h" x="484.3" y="386.3"/><use href="#h" x="496.9" y="377.7"/><use href="#h" x="510.5" y="369.5"/><use href="#h" x="525.0" y="361.8"/><use href="#h" x="540.3" y="354.6"/><use href="#h" x="556.4" y="347.9"/><use href="#h" x="573.2" y="341.7"/><use href="#h" x="590.7" y="336.1"/><use href="#h" x="608.7" y="331.1"/><use href="#h" x="627.3" y="326.6"/><use href="#h" x="646.3" y="322.8"/><use href="#h" x="665.7" y="319.7"/><use href="#h" x="685.4" y="317.1"/><use href="#h" x="705.4" y="315.3"/><use href="#h" x="725.6" y="314.0"/><use href="#h" x="745.8" y="313.5"/><use href="#h" x="766.1" y="313.6"/><use href="#h" x="786.3" y="314.4"/><use href="#h" x="806.4" y="315.8"/><use href="#h" x="826.3" y="317.9"/><use href="#h" x="845.9" y="320.7"/><use href="#h" x="865.2" y="324.1"/><use href="#h" x="884.1" y="328.1"/><use href="#h" x="902.5" y="332.7"/><use href="#h" x="920.3" y="337.9"/><use href="#h" x="937.6" y="343.7"/><use href="#h" x="954.2" y="350.1"/><use href="#h" x="970.0" y="357.0"/><use href="#h" x="985.0" y="364.4"/><use href="#h" x="999.2" y="372.2"/><use href="#h" x="1012.5" y="380.6"/><use href="#h" x="1024.8" y="389.3"/><use href="#h" x="1036.2" y="398.5"/><use href="#h" x="1046.5" y="408.0"/><use href="#h" x="1055.7" y="417.8"/><use href="#h" x="1063.8" y="427.9"/><use href="#h" x="1070.8" y="438.2"/><use href="#h" x="1076.7" y="448.8"/><use href="#h" x="1081.3" y="459.5"/><use href="#h" x="1084.8" y="470.4"/><use href="#h" x="1087.0" y="481.3"/><use href="#h" x="1088.0" y="492.4"/><use href="#h" x="1087.8" y="503.4"/><use href="#h" x="1086.4" y="514.4"/><use href="#h" x="1083.7" y="525.3"/><use href="#h" x="1079.9" y="536.1"/><use href="#h" x="1074.8" y="546.8"/><use href="#h" x="1068.6" y="557.3"/><use href="#h" x="1061.2" y="567.6"/><use href="#h" x="1075.2" y="583.7"/><use href="#h" x="1065.6" y="593.4"/><use href="#h" x="1055.1" y="602.8"/><use href="#h" x="1043.6" y="611.9"/><use href="#h" x="1031.2" y="620.6"/><use href="#h" x="1017.9" y="628.9"/><use href="#h" x="1003.8" y="636.8"/><use href="#h" x="988.9" y="644.2"/><use href="#h" x="973.3" y="651.2"/><use href="#h" x="956.9" y="657.7"/><use href="#h" x="939.9" y="663.7"/><use href="#h" x="922.4" y="669.1"/><use href="#h" x="904.3" y="674.0"/><use href="#h" x="885.7" y="678.4"/><use href="#h" x="866.7" y="682.1"/><use href="#h" x="847.3" y="685.3"/><use href="#h" x="827.6" y="687.9"/><use href="#h" x="807.7" y="689.9"/><use href="#h" x="787.7" y="691.3"/><use href="#h" x="767.5" y="692.1"/><use href="#h" x="747.2" y="692.2"/><use href="#h" x="727.0" y="691.7"/><use href="#h" x="706.9" y="690.7"/><use href="#h" x="686.9" y="689.0"/><use href="#h" x="667.1" y="686.7"/><use href="#h" x="647.6" y="683.8"/><use href="#h" x="628.4" y="680.3"/><use href="#h" x="609.6" y="676.2"/><use href="#h" x="591.3" y="671.5"/><use href="#h" x="573.4" y="666.3"/><use href="#h" x="556.1" y="660.6"/><use href="#h" x="539.5" y="654.4"/><use href="#h" x="523.5" y="647.6"/><use href="#h" x="508.2" y="640.4"/><use href="#h" x="493.7" y="632.7"/><use href="#h" x="480.0" y="624.6"/><use href="#h" x="467.2" y="616.1"/><use href="#h" x="455.3" y="607.2"/><use href="#h" x="444.3" y="598.0"/><use href="#h" x="434.3" y="588.4"/><use href="#h" x="425.2" y="578.6"/><use href="#h" x="417.2" y="568.4"/><use href="#h" x="410.3" y="558.1"/><use href="#h" x="404.4" y="547.6"/><use href="#h" x="399.7" y="536.9"/><use href="#h" x="396.0" y="526.0"/><use href="#h" x="393.5" y="515.1"/><use href="#h" x="392.1" y="504.1"/><use href="#h" x="391.8" y="493.1"/><use href="#h" x="392.7" y="482.1"/><use href="#h" x="394.7" y="471.2"/><use href="#h" x="397.8" y="460.3"/><use href="#h" x="402.0" y="449.5"/><use href="#h" x="407.4" y="438.9"/><use href="#h" x="413.8" y="428.5"/><use href="#h" x="421.3" y="418.3"/><use href="#h" x="429.8" y="408.3"/><use href="#h" x="439.4" y="398.6"/><use href="#h" x="449.9" y="389.2"/><use href="#h" x="461.4" y="380.1"/><use href="#h" x="473.8" y="371.4"/><use href="#h" x="487.1" y="363.1"/><use href="#h" x="501.2" y="355.2"/><use href="#h" x="516.1" y="347.8"/><use href="#h" x="531.7" y="340.8"/><use href="#h" x="548.1" y="334.3"/><use href="#h" x="565.1" y="328.3"/><use href="#h" x="582.6" y="322.9"/><use href="#h" x="600.7" y="318.0"/><use href="#h" x="619.3" y="313.6"/><use href="#h" x="638.3" y="309.9"/><use href="#h" x="657.7" y="306.7"/><use href="#h" x="677.4" y="304.1"/><use href="#h" x="697.3" y="302.1"/><use href="#h" x="717.3" y="300.7"/><use href="#h" x="737.5" y="299.9"/><use href="#h" x="757.8" y="299.8"/><use href="#h" x="778.0" y="300.3"/><use href="#h" x="798.1" y="301.3"/><use href="#h" x="818.1" y="303.0"/><use href="#h" x="837.9" y="305.3"/><use href="#h" x="857.4" y="308.2"/><use href="#h" x="876.6" y="311.7"/><use href="#h" x="895.4" y="315.8"/><use href="#h" x="913.7" y="320.5"/><use href="#h" x="931.6" y="325.7"/><use href="#h" x="948.9" y="331.4"/><use href="#h" x="965.5" y="337.6"/><use href="#h" x="981.5" y="344.4"/><use href="#h" x="996.8" y="351.6"/><use href="#h" x="1011.3" y="359.3"/><use href="#h" x="1025.0" y="367.4"/><use href="#h" x="1037.8" y="375.9"/><use href="#h" x="1049.7" y="384.8"/><use href="#h" x="1060.7" y="394.0"/><use href="#h" x="1070.7" y="403.6"/><use href="#h" x="1079.8" y="413.4"/><use href="#h" x="1087.8" y="423.6"/><use href="#h" x="1094.7" y="433.9"/><use href="#h" x="1100.6" y="444.4"/><use href="#h" x="1105.3" y="455.1"/><use href="#h" x="1109.0" y="466.0"/><use href="#h" x="1111.5" y="476.9"/><use href="#h" x="1112.9" y="487.9"/><use href="#h" x="1113.2" y="498.9"/><use href="#h" x="1112.3" y="509.9"/><use href="#h" x="1110.3" y="520.8"/><use href="#h" x="1107.2" y="531.7"/><use href="#h" x="1103.0" y="542.5"/><use href="#h" x="1097.6" y="553.1"/><use href="#h" x="1091.2" y="563.5"/><use href="#h" x="1083.7" y="573.7"/></g></svg><svg class="s" style="left:730px;top:470px" width="50" height="60" viewBox="0 0 50 60"><g transform="translate(-730,-470)" stroke="#0a0aff" fill="#0a0aff"><line x1="752.4" y1="511" x2="752.4" y2="489" stroke-width="1.4"/><path d="M752.4 482.5 L749.6 491 L755.2 491 Z" stroke="none"/><line x1="752.4" y1="511" x2="760" y2="512.6" stroke-width="1.4"/><path d="M767.5 514.8 L759 510.5 L759 514.8 Z" stroke="none"/><path d="M749.4 507.5 L755.4 513.5 M755.4 507.5 L749.4 513.5 M748.4 510.5 H756.4 M752.4 506.5 V514.5" stroke-width="1"/></g></svg><svg class="s" style="left:260px;top:795px" width="70" height="70" viewBox="0 0 70 70"><g transform="translate(-260,-795)"><line x1="288.3" y1="835.3" x2="288.3" y2="818.5" stroke="#1c6e1c" stroke-width="3"/><line x1="288.6" y1="833" x2="288.6" y2="820" stroke="#2e962e" stroke-width="1"/><path d="M283.8 819.8 L292.8 819.8 L288.3 810.8 Z" fill="#2a8a2a"/><path d="M287.3 813.5 L289.3 813.5 L288.5 819 Z" fill="#6ae06a"/><path d="M284.7 801 L287.6 805.3 L290.5 801 M287.6 805.3 V809.8" fill="none" stroke="#1a7a1a" stroke-width="1"/><line x1="288.3" y1="835.3" x2="306" y2="840.5" stroke="#b01818" stroke-width="3"/><path d="M305 836.6 L314.5 843 L305 845.3 Z" fill="#d83030"/><path d="M315.8 838.8 L320.2 847.8 M320.2 838.8 L315.8 847.8" fill="none" stroke="#e02020" stroke-width="1"/><line x1="288.3" y1="835.3" x2="277.5" y2="846.5" stroke="#1a1a98" stroke-width="4"/><path d="M274 842.5 L282.5 846.5 L279 852 L273.5 851.5 Z" fill="#1a1ad0"/><path d="M269 848.2 H273.5 L270 856.3 H274.2" fill="none" stroke="#2020e8" stroke-width="1"/></g></svg><svg class="s" style="left:28px;top:57px" width="20" height="20" viewBox="0 0 20 20"><path d="M7 3 L11 1 L19 4 L15 6 Z" fill="#fbe88a" stroke="#6e5200" stroke-width=".9"/><path d="M7 3 L15 6 L15 19 L7 16 Z" fill="#f5cf2e" stroke="#6e5200" stroke-width=".9"/><path d="M15 6 L19 4 L19 17 L15 19 Z" fill="#fbe88a" stroke="#6e5200" stroke-width=".9"/><path d="M1 8 L8 5 L13 7 L6 10 Z" fill="#86ea86" stroke="#0b5e0b" stroke-width=".9"/><path d="M1 8 L6 10 L6 16 L1 13 Z" fill="#159a15" stroke="#0b5e0b" stroke-width=".9"/><path d="M6 10 L13 7 L13 13 L6 16 Z" fill="#25c025" stroke="#0b5e0b" stroke-width=".9"/></svg><div class="t" style="left:-112px;top:79px;width:300px;text-align:center;font-size:11px;color:#000;font-weight:normal;letter-spacing:0px">Extruded</div><div class="t" style="left:-112px;top:92px;width:300px;text-align:center;font-size:11px;color:#000;font-weight:normal;letter-spacing:0px">Boss/Base</div><svg class="s" style="left:90px;top:57px" width="20" height="20" viewBox="0 0 20 20"><path d="M10 1.5 C16 1 19 6 18.5 11 C18 16 13 19 9 18.5 C5 18 2.5 15 3 12.5 C3.5 10 6 9.5 7.5 11 C9 13 12 13.5 13.5 11 C15 8 13 5 10.5 5 C9 5 8 3 10 1.5 Z" fill="#f5cf2e" stroke="#6e5200" stroke-width="1"/><ellipse cx="5.5" cy="12.5" rx="2" ry="1.5" fill="#fbe88a"/><line x1="4.5" y1="7" x2="15.5" y2="13" stroke="#1a1a2a" stroke-width="1.1"/></svg><div class="t" style="left:-50px;top:79px;width:300px;text-align:center;font-size:11px;color:#000;font-weight:normal;letter-spacing:0px">Revolved</div><div class="t" style="left:-50px;top:92px;width:300px;text-align:center;font-size:11px;color:#000;font-weight:normal;letter-spacing:0px">Boss/Base</div><svg class="s" style="left:134px;top:48px" width="20" height="20" viewBox="0 0 20 20"><path d="M1.5 15 C3 18 7 19.5 9 16 C11 12 11 8 13 5.5 C14 4.5 15.5 5 16.5 6.5 C18 6 19 4 17.5 2.5 C16 1 13 1 11 2.5 C8 5 8 10 6.5 13 C6 14 4.5 14 3.5 12.5 Z" fill="#f5cf2e" stroke="#6e5200" stroke-width="1"/><ellipse cx="16.5" cy="4.5" rx="1.8" ry="1.6" fill="#fbe88a" stroke="#6e5200" stroke-width=".7"/></svg><div class="t" style="left:159px;top:53px;font-size:11px;color:#000;font-weight:normal;letter-spacing:0px">Swept Boss/Base</div><svg class="s" style="left:134px;top:74px" width="20" height="20" viewBox="0 0 20 20"><path d="M5 3 C5 1 12 1 12 3 L12 10 L17 14 L9 19 L1 14 L5 10 Z" fill="#f5cf2e" stroke="#6e5200" stroke-width="1"/><ellipse cx="8.5" cy="3" rx="3.5" ry="1.3" fill="#fbe88a" stroke="#6e5200" stroke-width=".8"/><path d="M9 9 V18" stroke="#dcae1a" stroke-width="1.5"/></svg><div class="t" style="left:159px;top:79px;font-size:11px;color:#000;font-weight:normal;letter-spacing:0px">Lofted Boss/Base</div><svg class="s" style="left:134px;top:100px" width="20" height="20" viewBox="0 0 20 20"><path d="M1 9 L10 5 C11 3 13 2 15 2 L19 5 L19 11 L9 17 L1 12 Z" fill="#f5cf2e" stroke="#6e5200" stroke-width="1"/><path d="M1 9 L9 12 L19 6 M9 12 V17" fill="none" stroke="#6e5200" stroke-width=".9"/><path d="M2 9.5 L9 11.5 L18 6.5 L15 3 C13 3 11 5 10 6 Z" fill="#fbe88a"/></svg><div class="t" style="left:159px;top:105px;font-size:11px;color:#000;font-weight:normal;letter-spacing:0px">Boundary Boss/Base</div><div class="b" style="left:275px;top:45px;width:1px;height:78px;background:#c8c8c8"></div><svg class="s" style="left:295px;top:57px" width="20" height="20" viewBox="0 0 20 20"><path d="M2 4 L6 2 L16 2 L12 4 Z" fill="#fbe88a" stroke="#6e5200" stroke-width=".9"/><path d="M2 4 L12 4 L12 18 L2 18 Z" fill="#f5cf2e" stroke="#6e5200" stroke-width=".9"/><path d="M12 4 L16 2 L16 16 L12 18 Z" fill="#dcae1a" stroke="#6e5200" stroke-width=".9"/><rect x="4" y="6.5" width="6" height="9" fill="#25c025" stroke="#0b5e0b" stroke-width=".8"/><rect x="4.5" y="7" width="3" height="3.5" fill="#fff"/></svg><div class="t" style="left:155px;top:79px;width:300px;text-align:center;font-size:11px;color:#000;font-weight:normal;letter-spacing:0px">Extruded</div><div class="t" style="left:155px;top:92px;width:300px;text-align:center;font-size:11px;color:#000;font-weight:normal;letter-spacing:0px">Cut</div><svg class="s" style="left:346px;top:50px" width="20" height="20" viewBox="0 0 20 20"><path d="M2 8 L9 4 L14 7 L7 11 Z" fill="#fbe88a" stroke="#6e5200" stroke-width=".9"/><path d="M2 8 L7 11 L7 19 L2 16 Z" fill="#dcae1a" stroke="#6e5200" stroke-width=".9"/><path d="M7 11 L14 7 L14 15 L7 19 Z" fill="#f5cf2e" stroke="#6e5200" stroke-width=".9"/><ellipse cx="10.5" cy="13" rx="2.3" ry="2.6" fill="#25c025" stroke="#0b5e0b" stroke-width=".8"/><line x1="9" y1="3" x2="17" y2="11" stroke="#111" stroke-width="2.2"/><path d="M6 1 h2 M7 0 v2 M15 1 h2 M16 0 v2 M18 6 h2 M19 5 v2" stroke="#222" stroke-width=".8"/></svg><div class="t" style="left:206px;top:72px;width:300px;text-align:center;font-size:11px;color:#000;font-weight:normal;letter-spacing:0px">Hole</div><div class="t" style="left:206px;top:85px;width:300px;text-align:center;font-size:11px;color:#000;font-weight:normal;letter-spacing:0px">Wizard</div><svg class="s" style="left:353px;top:110px" width="7" height="4" viewBox="0 0 7 4"><path d="M0 0 H6 L3 3 Z" fill="#444"/></svg><svg class="s" style="left:397px;top:57px" width="20" height="20" viewBox="0 0 20 20"><path d="M1 5 C1 1 17 1 17 5 L17 15 C17 19 1 19 1 15 Z" fill="#f5cf2e" stroke="#6e5200" stroke-width="1"/><ellipse cx="9" cy="5" rx="8" ry="3" fill="#fbe88a" stroke="#6e5200" stroke-width=".8"/><path d="M5 7 L9 11 L13 7 L13 17 L9 13 L5 17 Z" fill="#25c025" stroke="#0b5e0b" stroke-width=".9"/></svg><div class="t" style="left:257px;top:79px;width:300px;text-align:center;font-size:11px;color:#000;font-weight:normal;letter-spacing:0px">Revolved</div><div class="t" style="left:257px;top:92px;width:300px;text-align:center;font-size:11px;color:#000;font-weight:normal;letter-spacing:0px">Cut</div><svg class="s" style="left:437px;top:48px" width="20" height="20" viewBox="0 0 20 20"><path d="M1 3 L4 1 L16 1 L13 3 Z" fill="#fbe88a" stroke="#6e5200" stroke-width=".9"/><path d="M1 3 H13 V18 H1 Z" fill="#f5cf2e" stroke="#6e5200" stroke-width=".9"/><path d="M13 3 L16 1 V16 L13 18 Z" fill="#dcae1a" stroke="#6e5200" stroke-width=".9"/><path d="M3.5 17 C3.5 10 7 5.5 13 5.5 L13 11 C10 11 8.5 13 8.5 17 Z" fill="#25c025" stroke="#0b5e0b" stroke-width=".9"/><rect x="9" y="11" width="4" height="5" fill="#fbe88a" stroke="#6e5200" stroke-width=".7"/></svg><div class="t" style="left:463px;top:53px;font-size:11px;color:#000;font-weight:normal;letter-spacing:0px">Swept Cut</div><svg class="s" style="left:437px;top:74px" width="20" height="20" viewBox="0 0 20 20"><path d="M1 3 L4 1 L16 1 L13 3 Z" fill="#fbe88a" stroke="#6e5200" stroke-width=".9"/><path d="M1 3 H13 V18 H1 Z" fill="#f5cf2e" stroke="#6e5200" stroke-width=".9"/><path d="M13 3 L16 1 V16 L13 18 Z" fill="#dcae1a" stroke="#6e5200" stroke-width=".9"/><path d="M6 3 C9 3 11 4 11 6 V17 H8 V8 C8 6 7 5 6 5 Z" fill="#25c025" stroke="#0b5e0b" stroke-width=".9"/></svg><div class="t" style="left:463px;top:79px;font-size:11px;color:#000;font-weight:normal;letter-spacing:0px">Lofted Cut</div><svg class="s" style="left:437px;top:100px" width="20" height="20" viewBox="0 0 20 20"><path d="M1 10 L10 6 L19 9 L19 14 L9 18 L1 15 Z" fill="#f5cf2e" stroke="#6e5200" stroke-width="1"/><path d="M1 10 L9 13 L19 9 M9 13 V18" fill="none" stroke="#6e5200" stroke-width=".9"/><path d="M1 10 C3 6 6 5 8 8 C10 4 14 2 19 8.5 L9 12.5 Z" fill="#25c025" stroke="#0b5e0b" stroke-width=".9"/><path d="M4 8 C6 7 7 8 8 9 M10 6 C12 5 14 5 16 7" stroke="#86ea86" fill="none"/></svg><div class="t" style="left:463px;top:105px;font-size:11px;color:#000;font-weight:normal;letter-spacing:0px">Boundary Cut</div><div class="b" style="left:545px;top:45px;width:1px;height:78px;background:#c8c8c8"></div><svg class="s" style="left:555px;top:50px" width="20" height="20" viewBox="0 0 20 20"><path d="M1 8 L9 5 L18 8 L10 11 Z" fill="#fbe88a" stroke="#6e5200" stroke-width=".9"/><path d="M1 8 L10 11 L10 19 L1 16 Z" fill="#f5cf2e" stroke="#6e5200" stroke-width=".9"/><path d="M10 11 L18 8 L18 16 L10 19 Z" fill="#fbe88a" stroke="#6e5200" stroke-width=".9"/><path d="M3 6 C3 2 12 0 16 2 C18 3 18 6 18 8 L10 11 C10 8 9 7 3 6 Z" fill="#25c025" stroke="#0b5e0b" stroke-width=".9"/><path d="M6 4 C10 2 14 2 16 4" stroke="#86ea86" stroke-width="1.2" fill="none"/></svg><div class="t" style="left:415px;top:72px;width:300px;text-align:center;font-size:11px;color:#000;font-weight:normal;letter-spacing:0px">Fillet</div><svg class="s" style="left:562px;top:110px" width="7" height="4" viewBox="0 0 7 4"><path d="M0 0 H6 L3 3 Z" fill="#444"/></svg><svg class="s" style="left:595px;top:50px" width="20" height="20" viewBox="0 0 20 20"><path d="M2 1 h4 v2 h2 v3 h-2 v2 h-4 Z" fill="#fbe88a" stroke="#6e5200" stroke-width=".9"/><path d="M11 1 h4 v2 h2 v3 h-2 v2 h-4 Z" fill="#25c025" stroke="#0b5e0b" stroke-width=".9"/><path d="M2 10 h4 v2 h2 v3 h-2 v2 h-4 Z" fill="#25c025" stroke="#0b5e0b" stroke-width=".9"/><path d="M11 10 h4 v2 h2 v3 h-2 v2 h-4 Z" fill="#25c025" stroke="#0b5e0b" stroke-width=".9"/></svg><div class="t" style="left:455px;top:72px;width:300px;text-align:center;font-size:11px;color:#000;font-weight:normal;letter-spacing:0px">Linear</div><div class="t" style="left:455px;top:85px;width:300px;text-align:center;font-size:11px;color:#000;font-weight:normal;letter-spacing:0px">Pattern</div><svg class="s" style="left:602px;top:110px" width="7" height="4" viewBox="0 0 7 4"><path d="M0 0 H6 L3 3 Z" fill="#444"/></svg><svg class="s" style="left:631px;top:48px" width="20" height="20" viewBox="0 0 20 20"><path d="M1 14 L11 1 L16 2 L16 14 L6 19 L1 16 Z" fill="#f5cf2e" stroke="#6e5200" stroke-width="1"/><path d="M1 14 L6 16 L16 12 M6 16 V19" fill="none" stroke="#6e5200" stroke-width=".8"/><path d="M4 13.5 L12 4 L12 11 Z" fill="#25c025" stroke="#0b5e0b" stroke-width=".9"/></svg><div class="t" style="left:657px;top:53px;font-size:11px;color:#000;font-weight:normal;letter-spacing:0px">Rib</div><svg class="s" style="left:631px;top:74px" width="20" height="20" viewBox="0 0 20 20"><path d="M1 7 L9 3 L15 6 L7 10 Z" fill="#86ea86" stroke="#0b5e0b" stroke-width=".9"/><path d="M1 7 L7 10 L11 18 L2 16 Z" fill="#18a418" stroke="#0b5e0b" stroke-width=".9"/><path d="M7 10 L15 6 L18 13 L11 18 Z" fill="#25c025" stroke="#0b5e0b" stroke-width=".9"/><path d="M11 13 L17 11 L17 17 L11 19 Z" fill="#fbe88a" stroke="#6e5200" stroke-width=".9"/></svg><div class="t" style="left:657px;top:79px;font-size:11px;color:#000;font-weight:normal;letter-spacing:0px">Draft</div><svg class="s" style="left:631px;top:100px" width="20" height="20" viewBox="0 0 20 20"><path d="M1 4 L5 1 L18 2 L14 5 Z" fill="#fbe88a" stroke="#6e5200" stroke-width=".9"/><path d="M1 4 L14 5 L14 19 L1 17 Z" fill="#f5cf2e" stroke="#6e5200" stroke-width=".9"/><path d="M14 5 L18 2 L18 16 L14 19 Z" fill="#dcae1a" stroke="#6e5200" stroke-width=".9"/><path d="M4 6 L11 6.5 L11 16.5 L4 15.5 Z" fill="#25c025" stroke="#0b5e0b" stroke-width=".9"/><path d="M4 6 L7 8 L7 17" fill="none" stroke="#0b5e0b" stroke-width=".8"/></svg><div class="t" style="left:657px;top:105px;font-size:11px;color:#000;font-weight:normal;letter-spacing:0px">Shell</div><svg class="s" style="left:695px;top:48px" width="20" height="20" viewBox="0 0 20 20"><path d="M1 4 L1 15 C1 19.5 17 19.5 17 15 L17 4" fill="#f5cf2e" stroke="#6e5200"/><ellipse cx="9" cy="4" rx="8" ry="3" fill="#fbe88a" stroke="#6e5200"/><path d="M3 8 C6 9 12 9 15 8 V15 C12 16 6 16 3 15 Z" fill="#25c025" stroke="#0b5e0b" stroke-width=".9"/><path d="M8 10 h-3 v3 h3 M10 10 h3 v3 h-2" fill="none" stroke="#0b5e0b" stroke-width="1.2"/></svg><div class="t" style="left:721px;top:53px;font-size:11px;color:#000;font-weight:normal;letter-spacing:0px">Wrap</div><svg class="s" style="left:695px;top:74px" width="20" height="20" viewBox="0 0 20 20"><path d="M1 9 L9 7 L18 9 L18 15 L4 19 L1 17 Z" fill="#eb9a2a" stroke="#7a4a00" stroke-width=".9"/><path d="M6 4 L10 2 L16 3 L12 5 Z" fill="#fbe88a" stroke="#6e5200" stroke-width=".8"/><path d="M6 4 L12 5 L12 13 L6 12 Z" fill="#f5cf2e" stroke="#6e5200" stroke-width=".8"/><path d="M12 5 L16 3 L16 11 L12 13 Z" fill="#dcae1a" stroke="#6e5200" stroke-width=".8"/></svg><div class="t" style="left:721px;top:79px;font-size:11px;color:#000;font-weight:normal;letter-spacing:0px">Intersect</div><svg class="s" style="left:695px;top:100px" width="20" height="20" viewBox="0 0 20 20"><path d="M1 2 h4 v5 h3 v4 h-3 v7 h-4 Z" fill="#25c025" stroke="#0b5e0b" stroke-width=".9"/><path d="M18 2 h-4 v5 h-3 v4 h3 v7 h4 Z" fill="#fbe88a" stroke="#6e5200" stroke-width=".9"/><line x1="9.5" y1="0" x2="9.5" y2="19" stroke="#222" stroke-width="1"/></svg><div class="t" style="left:721px;top:105px;font-size:11px;color:#000;font-weight:normal;letter-spacing:0px">Mirror</div><div class="b" style="left:776px;top:45px;width:1px;height:78px;background:#c8c8c8"></div><svg class="s" style="left:798px;top:50px" width="20" height="20" viewBox="0 0 20 20"><circle cx="3.5" cy="3.5" r="2.6" fill="#5a9ad0" stroke="#1f4f80"/><path d="M7 7 L17 3 L17 15 L7 19 Z" fill="#8cc0e8" stroke="#1f4f80"/><path d="M7 7 L11 5.5 L11 17.5 L7 19 Z" fill="#4a88c0"/><line x1="12" y1="2" x2="12" y2="20" stroke="#222" stroke-dasharray="1.5 1"/></svg><div class="t" style="left:658px;top:72px;width:300px;text-align:center;font-size:11px;color:#000;font-weight:normal;letter-spacing:0px">Reference</div><div class="t" style="left:658px;top:85px;width:300px;text-align:center;font-size:11px;color:#000;font-weight:normal;letter-spacing:0px">Geometry</div><svg class="s" style="left:805px;top:110px" width="7" height="4" viewBox="0 0 7 4"><path d="M0 0 H6 L3 3 Z" fill="#444"/></svg><svg class="s" style="left:851px;top:50px" width="20" height="20" viewBox="0 0 20 20"><path d="M3 2 C0 6 2 16 8 16 C13 16 13 10 11 6 C10 4 12 2 17 2.5" fill="none" stroke="#3a78b0" stroke-width="1.5"/></svg><div class="t" style="left:711px;top:72px;width:300px;text-align:center;font-size:11px;color:#000;font-weight:normal;letter-spacing:0px">Curves</div><svg class="s" style="left:858px;top:110px" width="7" height="4" viewBox="0 0 7 4"><path d="M0 0 H6 L3 3 Z" fill="#444"/></svg><div class="b" style="left:885px;top:45px;width:1px;height:78px;background:#c8c8c8"></div><svg class="s" style="left:907px;top:56px" width="20" height="20" viewBox="0 0 20 20"><path d="M3.4 2.1 L17.7 9.3 L17.7 14.7 L3.4 7.6 Z" fill="#fbe060" stroke="#4a3000" stroke-width=".9"/><path d="M6.5 3.8 v2 M9.5 5.3 v2 M12.5 6.8 v2 M15.5 8.3 v2" stroke="#111" stroke-width=".9"/><path d="M0.5 10.5 L13 16.8" stroke="#2a80b8" stroke-width="1.8"/><path d="M10 15 L10 19.8 L17.8 19.4 Z" fill="#0f5a80"/></svg><div class="t" style="left:767px;top:78px;width:300px;text-align:center;font-size:11px;color:#000;font-weight:normal;letter-spacing:0px">Instant3D</div><svg class="s" style="left:14px;top:8px" width="36" height="30" viewBox="0 0 36 30"><g transform="translate(-14,-8)" fill="none" stroke="#e21b1b" stroke-linecap="round"><path d="M26.5 10.6 C31 9.8 36.5 10.2 36.8 12 C37 14.5 32 17.5 28.5 19.8" stroke-width="1.9"/><path d="M20.5 23 C25 22.5 31.5 22 32.8 24 C34 27 28 31.5 17.5 35.5 L24.3 26.5" stroke-width="1.9"/><path d="M44 18.3 C40 18 34.5 18.5 35 20.5 C35.5 23 42.5 25.5 42.5 28.5 C42.3 31.5 36 32 31.5 32" stroke-width="2"/></g></svg><div class="t" style="left:50px;top:20px;font-size:15px;color:#e01818;font-style:italic;font-weight:bold">SOLID</div><div class="t" style="left:96px;top:20px;font-size:15px;color:#e01818;font-style:italic;transform:scaleX(0.95);transform-origin:0 0">WORKS</div><svg class="s" style="left:488px;top:14px" width="20" height="20" viewBox="0 0 20 20"><g transform="translate(-488,-14)"><path d="M494 22.6 L498.3 22.9 L501.5 18.3 L504.8 21.5 L500.2 24.7 L500.6 28.8 Z" fill="#2a88c8"/><line x1="493.3" y1="30" x2="498" y2="25.3" stroke="#2a88c8" stroke-width="1.6"/></g></svg><svg class="s" style="left:533px;top:15px" width="16" height="20" viewBox="0 0 16 20"><path d="M1.5 1.5 H10 L14.5 6 V18.5 H1.5 Z" fill="#f0f0f0" stroke="#2a2a2a" stroke-width="1.2"/><path d="M10 1.5 V6 H14.5" fill="none" stroke="#2a2a2a"/></svg><svg class="s" style="left:558px;top:22px" width="7" height="4" viewBox="0 0 7 4"><path d="M0 0 H6 L3 3 Z" fill="#444"/></svg><svg class="s" style="left:570px;top:14px" width="22" height="22" viewBox="0 0 22 22"><path d="M1 5 H7 L9 7 H18 V20 H1 Z" fill="#e0e0e0" stroke="#555"/><path d="M4 20 L7 10 H21 L18 20 Z" fill="#f4f4f4" stroke="#555"/><path d="M9 2 C14 2 15 5 15 9 L18 9 L13 14 L9 9 L12 9 C12 6 11 4 9 4 Z" fill="#2a9a2a"/></svg><svg class="s" style="left:597px;top:22px" width="7" height="4" viewBox="0 0 7 4"><path d="M0 0 H6 L3 3 Z" fill="#444"/></svg><svg class="s" style="left:610px;top:14px" width="20" height="21" viewBox="0 0 20 21"><rect x="1" y="1" width="18" height="19" rx="2" fill="#3a78b8" stroke="#1a4a80"/><rect x="4" y="2" width="12" height="8" fill="#eee"/><rect x="6" y="13" width="8" height="7" fill="#333"/></svg><svg class="s" style="left:636px;top:22px" width="7" height="4" viewBox="0 0 7 4"><path d="M0 0 H6 L3 3 Z" fill="#444"/></svg><svg class="s" style="left:649px;top:15px" width="20" height="19" viewBox="0 0 20 19"><rect x="4" y="1" width="12" height="7" fill="#f0f0f0" stroke="#666"/><rect x="1" y="7" width="18" height="7" rx="1" fill="#3a88c8" stroke="#1a4a80"/><rect x="4" y="13" width="12" height="5" fill="#fafafa" stroke="#666"/></svg><svg class="s" style="left:675px;top:22px" width="7" height="4" viewBox="0 0 7 4"><path d="M0 0 H6 L3 3 Z" fill="#444"/></svg><svg class="s" style="left:688px;top:15px" width="20" height="19" viewBox="0 0 20 19"><path d="M3 5 L1 12 L8 11 Z" fill="#3a78b8"/><path d="M4 8 C10 2 19 5 17 13 C16 16 14 17 12 18" fill="none" stroke="#3a78b8" stroke-width="3"/></svg><svg class="s" style="left:714px;top:22px" width="7" height="4" viewBox="0 0 7 4"><path d="M0 0 H6 L3 3 Z" fill="#444"/></svg><div class="b" style="left:724px;top:12px;width:26px;height:24px;background:#b4b4b4;border:1px solid #999;box-sizing:border-box"></div><div class="b" style="left:749px;top:12px;width:14px;height:24px;background:#fafafa;border:1px solid #b0b0b0;box-sizing:border-box"></div><svg class="s" style="left:729px;top:15px" width="16" height="19" viewBox="0 0 16 19"><path d="M2 1 L2 15 L6 12 L9 18 L11 17 L8 11 L13 11 Z" fill="#fff" stroke="#222"/></svg><svg class="s" style="left:753px;top:22px" width="7" height="4" viewBox="0 0 7 4"><path d="M0 0 H6 L3 3 Z" fill="#444"/></svg><svg class="s" style="left:769px;top:14px" width="14" height="21" viewBox="0 0 14 21"><rect x="1" y="1" width="11" height="19" rx="5" fill="#222"/><circle cx="6.5" cy="6" r="3" fill="#e02020"/><circle cx="6.5" cy="15" r="3" fill="#20a020"/></svg><svg class="s" style="left:793px;top:15px" width="18" height="19" viewBox="0 0 18 19"><rect x="1" y="1" width="16" height="17" fill="#fff" stroke="#333"/><rect x="3" y="4" width="3" height="2" fill="#3a78b8"/><rect x="3" y="8" width="3" height="2" fill="#3a78b8"/><rect x="3" y="12" width="3" height="2" fill="#3a78b8"/><path d="M8 5 H15 M8 9 H15 M8 13 H15" stroke="#333"/></svg><svg class="s" style="left:818px;top:15px" width="19" height="19" viewBox="0 0 19 19"><circle cx="9.5" cy="9.5" r="6.5" fill="none" stroke="#555" stroke-width="2.5" stroke-dasharray="3 2"/><circle cx="9.5" cy="9.5" r="3" fill="none" stroke="#555" stroke-width="1.2"/></svg><svg class="s" style="left:844px;top:22px" width="7" height="4" viewBox="0 0 7 4"><path d="M0 0 H6 L3 3 Z" fill="#444"/></svg><svg class="s" style="left:985px;top:15px" width="17" height="17" viewBox="0 0 17 17"><rect x="0.5" y="0.5" width="16" height="16" fill="#222"/><path d="M4 4 L9 8 L4 12" fill="none" stroke="#fff" stroke-width="1.3"/><path d="M8 13 H13" stroke="#fff"/></svg><svg class="s" style="left:1148px;top:14px" width="22" height="20" viewBox="0 0 22 20"><circle cx="8" cy="8" r="6" fill="none" stroke="#666" stroke-width="1.6"/><path d="M12 12 L18 18" stroke="#666" stroke-width="2.4"/></svg><svg class="s" style="left:1172px;top:22px" width="8" height="5" viewBox="0 0 8 5"><path d="M0 0 H7 L3.5 4 Z" fill="#888"/></svg><div class="t" style="left:1193px;top:16px;font-size:18px;color:#333;font-weight:bold;letter-spacing:0px">?</div><svg class="s" style="left:1215px;top:21px" width="7" height="4" viewBox="0 0 7 4"><path d="M0 0 H6 L3 3 Z" fill="#444"/></svg><div class="b" style="left:1233px;top:27px;width:11px;height:3px;background:#444"></div><svg class="s" style="left:1256px;top:17px" width="18" height="14" viewBox="0 0 18 14"><rect x="0.5" y="0.5" width="17" height="13" fill="none" stroke="#333"/><line x1="9" y1="1" x2="9" y2="13" stroke="#333"/><path d="M3 7 H15 M5 5 L3 7 L5 9 M13 5 L15 7 L13 9" fill="none" stroke="#333"/></svg><svg class="s" style="left:1283px;top:18px" width="15" height="12" viewBox="0 0 15 12"><rect x="0.5" y="0.5" width="14" height="11" fill="none" stroke="#333"/><rect x="0.5" y="0.5" width="14" height="2" fill="#333"/></svg><svg class="s" style="left:1310px;top:18px" width="13" height="12" viewBox="0 0 13 12"><path d="M1 1 L12 11 M12 1 L1 11" stroke="#333" stroke-width="1.4"/></svg><svg class="s" style="left:611px;top:132px" width="20" height="20" viewBox="0 0 20 20"><circle cx="11" cy="8" r="6" fill="#fff" stroke="#777" stroke-width="1.4"/><path d="M7 12 L2 18" stroke="#3a78b8" stroke-width="3"/><path d="M11 4 v8 M7 8 h8" stroke="#999"/></svg><svg class="s" style="left:637px;top:132px" width="20" height="20" viewBox="0 0 20 20"><rect x="7" y="1" width="12" height="11" fill="none" stroke="#555" stroke-dasharray="2 1.5"/><circle cx="10" cy="9" r="6" fill="#fff" stroke="#777" stroke-width="1.4"/><path d="M6 13 L2 18" stroke="#3a78b8" stroke-width="3"/></svg><svg class="s" style="left:663px;top:132px" width="20" height="20" viewBox="0 0 20 20"><path d="M3 12 L15 2 L19 6 L8 16 Z" fill="#ddd" stroke="#777"/><path d="M10 15 H18 M14 12 L10 15 L14 18" stroke="#3a78b8" stroke-width="2" fill="none"/></svg><svg class="s" style="left:689px;top:132px" width="20" height="20" viewBox="0 0 20 20"><path d="M2 6 C2 2 18 2 18 6 V17 C18 19 2 19 2 17 Z" fill="#a8c8e0" stroke="#555"/><rect x="7" y="5" width="6" height="13" fill="#fff" stroke="#555"/></svg><svg class="s" style="left:714px;top:132px" width="20" height="20" viewBox="0 0 20 20"><path d="M3 14 L13 4 L17 8 L7 18 Z" fill="#ddd" stroke="#777"/><path d="M10 2 L6 8 L10 8 L8 13" stroke="#f0b020" stroke-width="2" fill="none"/><text x="11" y="19" font-size="10" fill="#3a78b8" font-family="Liberation Sans">A</text></svg><svg class="s" style="left:740px;top:132px" width="20" height="20" viewBox="0 0 20 20"><path d="M2 6 L6 2 H18 V14 L14 18 H2 Z" fill="#a8d0f0" stroke="#555"/><path d="M2 6 H14 V18 M14 6 L18 2" fill="none" stroke="#555"/></svg><svg class="s" style="left:766px;top:140px" width="8" height="5" viewBox="0 0 8 5"><path d="M0 0 H7 L3.5 4 Z" fill="#999"/></svg><svg class="s" style="left:782px;top:132px" width="20" height="20" viewBox="0 0 20 20"><path d="M3 5 L10 2 L17 5 V16 L10 19 L3 16 Z" fill="#b8d8f0" stroke="#666"/><path d="M10 2 V19 M3 5 L10 8 L17 5" fill="none" stroke="#666"/></svg><svg class="s" style="left:807px;top:140px" width="8" height="5" viewBox="0 0 8 5"><path d="M0 0 H7 L3.5 4 Z" fill="#999"/></svg><svg class="s" style="left:821px;top:132px" width="20" height="20" viewBox="0 0 20 20"><path d="M1 10 C6 3 14 3 19 10 C14 17 6 17 1 10 Z" fill="#ddd" stroke="#999"/><circle cx="10" cy="10" r="4" fill="#555"/><line x1="10" y1="2" x2="10" y2="18" stroke="#888"/></svg><svg class="s" style="left:846px;top:140px" width="8" height="5" viewBox="0 0 8 5"><path d="M0 0 H7 L3.5 4 Z" fill="#999"/></svg><svg class="s" style="left:860px;top:132px" width="20" height="20" viewBox="0 0 20 20"><circle cx="9" cy="9" r="8" fill="#3a9a3a"/><path d="M9 9 L9 1 A8 8 0 0 1 17 9 Z" fill="#e03030"/><path d="M9 9 L1 9 A8 8 0 0 1 9 1 Z" fill="#3a78c8"/><path d="M9 9 L17 9 A8 8 0 0 1 9 17 Z" fill="#f0c020"/><path d="M12 18 L18 10 L20 12 L14 19 Z" fill="#f0a030" stroke="#7a5a00"/></svg><svg class="s" style="left:885px;top:132px" width="20" height="20" viewBox="0 0 20 20"><circle cx="9" cy="8" r="7" fill="#3a9a3a"/><path d="M9 8 L9 1 A7 7 0 0 1 16 8 Z" fill="#e03030"/><path d="M9 8 L2 8 A7 7 0 0 1 9 1 Z" fill="#3a78c8"/><path d="M9 8 L16 8 A7 7 0 0 1 9 15 Z" fill="#f0c020"/><path d="M2 13 h4 v3 h4 v-3 h4 v3 h4 v3 H2 Z" fill="#333"/></svg><svg class="s" style="left:912px;top:140px" width="8" height="5" viewBox="0 0 8 5"><path d="M0 0 H7 L3.5 4 Z" fill="#999"/></svg><svg class="s" style="left:927px;top:132px" width="20" height="20" viewBox="0 0 20 20"><rect x="2" y="3" width="16" height="11" fill="#eee" stroke="#666"/><path d="M10 14 V17 M6 18 H14" stroke="#666" stroke-width="1.5"/></svg><svg class="s" style="left:952px;top:140px" width="8" height="5" viewBox="0 0 8 5"><path d="M0 0 H7 L3.5 4 Z" fill="#999"/></svg><svg class="s" style="left:1197px;top:134px" width="14" height="15" viewBox="0 0 14 15"><rect x="0.5" y="0.5" width="12" height="13" fill="none" stroke="#999"/><path d="M7 4 L4 7 L7 10 Z" fill="#999"/></svg><svg class="s" style="left:1223px;top:134px" width="14" height="15" viewBox="0 0 14 15"><rect x="0.5" y="0.5" width="12" height="13" fill="none" stroke="#999"/><path d="M6 4 L9 7 L6 10 Z" fill="#999"/></svg><div class="b" style="left:1252px;top:146px;width:10px;height:2px;background:#a0a0a0"></div><svg class="s" style="left:1275px;top:134px" width="14" height="12" viewBox="0 0 14 12"><rect x="0.5" y="4.5" width="9" height="7" fill="none" stroke="#999"/><path d="M3 4 V0.5 H12.5 V8 H10" fill="none" stroke="#999"/></svg><svg class="s" style="left:1302px;top:135px" width="13" height="13" viewBox="0 0 13 13"><path d="M1 1 L12 12 M12 1 L1 12" stroke="#999" stroke-width="1.3"/></svg><div class="b" style="left:1303px;top:177px;width:26px;height:24px;background:#d5d5d5;border:1px solid #a8a8a8;border-right:none;border-bottom:none;box-sizing:border-box"></div><div class="b" style="left:1303px;top:201px;width:26px;height:24px;background:#d5d5d5;border:1px solid #a8a8a8;border-right:none;border-bottom:none;box-sizing:border-box"></div><div class="b" style="left:1303px;top:225px;width:26px;height:24px;background:#d5d5d5;border:1px solid #a8a8a8;border-right:none;border-bottom:none;box-sizing:border-box"></div><div class="b" style="left:1303px;top:249px;width:26px;height:24px;background:#d5d5d5;border:1px solid #a8a8a8;border-right:none;border-bottom:none;box-sizing:border-box"></div><div class="b" style="left:1303px;top:273px;width:26px;height:24px;background:#f7f7f7;border:1px solid #a8a8a8;border-right:none;border-bottom:none;box-sizing:border-box"></div><div class="b" style="left:1303px;top:297px;width:26px;height:25px;background:#d5d5d5;border:1px solid #a8a8a8;border-right:none;box-sizing:border-box"></div><svg class="s" style="left:1306px;top:180px" width="20" height="19" viewBox="0 0 20 19"><path d="M2 9 L10 2 L18 9" fill="none" stroke="#1f5f90" stroke-width="2"/><path d="M4 8 V17 H16 V8" fill="#fff" stroke="#333"/><rect x="8" y="11" width="4" height="6" fill="#fff" stroke="#333"/></svg><svg class="s" style="left:1306px;top:204px" width="20" height="19" viewBox="0 0 20 19"><path d="M3 5 L8 3 V17 L3 18 Z M8 4 L12 2 V16 L8 17 M12 3 L16 2 V15 L12 16" fill="#fff" stroke="#333"/></svg><svg class="s" style="left:1306px;top:228px" width="20" height="19" viewBox="0 0 20 19"><path d="M1 4 H7 L9 6 H17 V16 H1 Z" fill="#ddd" stroke="#444"/><path d="M3 16 L6 9 H19 L16 16 Z" fill="#fafafa" stroke="#444"/></svg><svg class="s" style="left:1306px;top:252px" width="20" height="19" viewBox="0 0 20 19"><rect x="1" y="2" width="17" height="15" fill="#fff" stroke="#444"/><rect x="3" y="5" width="6" height="3" fill="#f0c020" stroke="#7a5a00"/><rect x="10" y="5" width="6" height="3" fill="#f0c020" stroke="#7a5a00"/><rect x="5" y="10" width="6" height="5" fill="#f0c020" stroke="#7a5a00"/><rect x="13" y="10" width="3" height="5" fill="#aaa"/></svg><svg class="s" style="left:1306px;top:276px" width="20" height="19" viewBox="0 0 20 19"><circle cx="10" cy="9.5" r="8" fill="#3a9a3a"/><path d="M10 9.5 L10 1.5 A8 8 0 0 1 18 9.5 Z" fill="#e03030"/><path d="M10 9.5 L2 9.5 A8 8 0 0 1 10 1.5 Z" fill="#3a78c8"/><path d="M10 9.5 L18 9.5 A8 8 0 0 1 10 17.5 Z" fill="#f0c020"/></svg><svg class="s" style="left:1306px;top:300px" width="20" height="19" viewBox="0 0 20 19"><rect x="1" y="2" width="17" height="16" fill="#fff" stroke="#1f5f90"/><rect x="1" y="2" width="17" height="3" fill="#3a78b8"/><rect x="3" y="7" width="3" height="2" fill="#3a78b8"/><rect x="3" y="11" width="3" height="2" fill="#3a78b8"/><rect x="3" y="15" width="3" height="2" fill="#3a78b8"/><path d="M8 8 H16 M8 12 H16 M8 16 H16" stroke="#333"/></svg><svg class="s" style="left:8px;top:170px" width="28" height="26" viewBox="0 0 28 26"><path d="M5.3 9.2 L8.4 8.2 L8.4 5.8 L12.9 4.2 L17.6 5.9 L17.6 11.2 L21.6 12.3 L21.6 19 L16.2 21.3 L5.3 14 Z" fill="#f7d21e" stroke="#5a4000" stroke-width="1.1" stroke-linejoin="round"/><path d="M12.3 7 L17.6 5.9 L17.6 11.2 L12.3 12 Z" fill="#fbe470"/><path d="M16.2 14.3 L21.6 12.3 L21.6 19 L16.2 21.3 Z" fill="#fbe470"/><path d="M8.4 5.8 L12.9 4.2 L17.6 5.9 L12.3 7 Z" fill="#fdf2b0"/><path d="M12.3 12 L17.6 11.2 L21.6 12.3 L16.2 14.3 Z" fill="#fdf2b0"/><path d="M12.3 7 V12 L16.2 14.3 V21.3 M5.3 9.2 L8.4 10 V8.2" fill="none" stroke="#6a4c00" stroke-width=".9"/><path d="M5.3 9.2 L8.4 8.2 L8.4 5.8 L12.9 4.2 L17.6 5.9 L17.6 11.2 L21.6 12.3 L21.6 19 L16.2 21.3 L5.3 14 Z" fill="none" stroke="#5a4000" stroke-width="1.1" stroke-linejoin="round"/></svg><svg class="s" style="left:51px;top:174px" width="20" height="19" viewBox="0 0 20 19"><rect x="1" y="1" width="17" height="17" fill="#fff" stroke="#1f4f80" stroke-width="1.3"/><rect x="1" y="1" width="17" height="3" fill="#3a78b8"/><rect x="3" y="6" width="4" height="2" fill="#2a68a8"/><rect x="3" y="10" width="4" height="2" fill="#2a68a8"/><rect x="3" y="14" width="4" height="2" fill="#2a68a8"/><path d="M9 7 H16 M9 11 H16 M9 15 H16" stroke="#333"/></svg><svg class="s" style="left:91px;top:174px" width="18" height="19" viewBox="0 0 18 19"><path d="M3 1 V18 M3 4 H7 M3 10 H7 M3 16 H7" stroke="#333" fill="none"/><rect x="7" y="1" width="7" height="6" fill="#fff" stroke="#333"/><rect x="10" y="8" width="7" height="6" fill="#fff" stroke="#333"/><rect x="7" y="13" width="7" height="5" fill="#fff" stroke="#333"/></svg><svg class="s" style="left:130px;top:173px" width="21" height="21" viewBox="0 0 21 21"><circle cx="10.5" cy="10.5" r="6.5" fill="none" stroke="#111" stroke-width="1.8"/><path d="M10.5 1 V20 M1 10.5 H20" stroke="#111" stroke-width="1.8"/></svg><svg class="s" style="left:171px;top:173px" width="20" height="20" viewBox="0 0 20 20"><circle cx="10" cy="10" r="8.5" fill="#3a9a3a"/><path d="M10 10 L10 1.5 A8.5 8.5 0 0 1 18.5 10 Z" fill="#e03030"/><path d="M10 10 L1.5 10 A8.5 8.5 0 0 1 10 1.5 Z" fill="#3a78c8"/><path d="M10 10 L18.5 10 A8.5 8.5 0 0 1 10 18.5 Z" fill="#f0c020"/><path d="M12 3 L17 7 L14 14 Z" fill="#111"/></svg><svg class="s" style="left:4px;top:225px" width="17" height="18" viewBox="5 4 17 18"><path d="M5.3 9.2 L8.4 8.2 L8.4 5.8 L12.9 4.2 L17.6 5.9 L17.6 11.2 L21.6 12.3 L21.6 19 L16.2 21.3 L5.3 14 Z" fill="#f7d21e" stroke="#5a4000" stroke-width="1.1" stroke-linejoin="round"/><path d="M12.3 7 L17.6 5.9 L17.6 11.2 L12.3 12 Z" fill="#fbe470"/><path d="M16.2 14.3 L21.6 12.3 L21.6 19 L16.2 21.3 Z" fill="#fbe470"/><path d="M8.4 5.8 L12.9 4.2 L17.6 5.9 L12.3 7 Z" fill="#fdf2b0"/><path d="M12.3 12 L17.6 11.2 L21.6 12.3 L16.2 14.3 Z" fill="#fdf2b0"/><path d="M12.3 7 V12 L16.2 14.3 V21.3 M5.3 9.2 L8.4 10 V8.2" fill="none" stroke="#6a4c00" stroke-width=".9"/><path d="M5.3 9.2 L8.4 8.2 L8.4 5.8 L12.9 4.2 L17.6 5.9 L17.6 11.2 L21.6 12.3 L21.6 19 L16.2 21.3 L5.3 14 Z" fill="none" stroke="#5a4000" stroke-width="1.1" stroke-linejoin="round"/></svg><svg class="s" style="left:24px;top:246px" width="20" height="18" viewBox="0 0 20 18"><path d="M1 3 H7 L9 5 H18 V17 H1 Z" fill="#eee" stroke="#444"/><rect x="1" y="5" width="17" height="12" fill="#f4f4f4" stroke="#444"/><path d="M6 11 A4 4 0 1 0 9 7 M9 7 L9 11 L12 12" fill="none" stroke="#2a6ab0" stroke-width="1.3"/></svg><svg class="s" style="left:24px;top:268px" width="20" height="18" viewBox="0 0 20 18"><path d="M1 3 H7 L9 5 H18 V17 H1 Z" fill="#eee" stroke="#444"/><rect x="1" y="5" width="17" height="12" fill="#f4f4f4" stroke="#444"/><circle cx="9.5" cy="11" r="4" fill="#fff" stroke="#333"/><path d="M9.5 11 L12 9" stroke="#e02020" stroke-width="1.5"/></svg><svg class="s" style="left:24px;top:290px" width="20" height="18" viewBox="0 0 20 18"><path d="M1 3 H7 L9 5 H18 V17 H1 Z" fill="#eee" stroke="#444"/><rect x="1" y="5" width="17" height="12" fill="#f4f4f4" stroke="#444"/><text x="5" y="16" font-family="Liberation Serif" font-size="11" font-weight="bold" fill="#2a6ab0">A</text></svg><svg class="s" style="left:24px;top:312px" width="20" height="18" viewBox="0 0 20 18"><path d="M1 3 H7 L9 5 H18 V17 H1 Z" fill="#eee" stroke="#444"/><rect x="1" y="5" width="17" height="12" fill="#f4f4f4" stroke="#444"/><text x="5" y="16" font-family="Liberation Serif" font-size="11" fill="#222">Σ</text></svg><svg class="s" style="left:24px;top:333px" width="20" height="20" viewBox="0 0 20 20"><circle cx="3" cy="3" r="2" fill="#fff" stroke="#777"/><circle cx="3" cy="9" r="2" fill="#7ab0e0" stroke="#3a78b8"/><circle cx="3" cy="15" r="2" fill="#f0c020" stroke="#9a7400"/><path d="M7 3 H17 M7 9 H17 M7 15 H12" stroke="#333" stroke-width="1.5"/><circle cx="15" cy="15" r="3" fill="#333"/></svg><svg class="s" style="left:26px;top:355px" width="16" height="18" viewBox="0 0 16 18"><path d="M2 4 L13 1 V14 L2 17 Z" fill="#fff" stroke="#444"/><path d="M7.5 2 V16" stroke="#444" stroke-dasharray="2 1.5"/></svg><svg class="s" style="left:26px;top:377px" width="16" height="18" viewBox="0 0 16 18"><path d="M2 4 L13 1 V14 L2 17 Z" fill="#fff" stroke="#444"/><path d="M7.5 2 V16" stroke="#444" stroke-dasharray="2 1.5"/></svg><svg class="s" style="left:26px;top:399px" width="16" height="18" viewBox="0 0 16 18"><path d="M2 4 L13 1 V14 L2 17 Z" fill="#fff" stroke="#444"/><path d="M7.5 2 V16" stroke="#444" stroke-dasharray="2 1.5"/></svg><svg class="s" style="left:25px;top:421px" width="20" height="18" viewBox="0 0 20 18"><path d="M3 1 V15 H17" fill="none" stroke="#111" stroke-width="1.4"/><path d="M1 4 L3 0 L5 4 Z M14 13 L18 15 L14 17 Z" fill="#111"/></svg><svg class="s" style="left:24px;top:443px" width="20" height="19" viewBox="0 0 20 19"><path d="M7 3 L11 1 L19 4 L15 6 Z" fill="#fbe88a" stroke="#6e5200" stroke-width=".9"/><path d="M7 3 L15 6 L15 19 L7 16 Z" fill="#f5cf2e" stroke="#6e5200" stroke-width=".9"/><path d="M15 6 L19 4 L19 17 L15 19 Z" fill="#fbe88a" stroke="#6e5200" stroke-width=".9"/><path d="M1 8 L8 5 L13 7 L6 10 Z" fill="#86ea86" stroke="#0b5e0b" stroke-width=".9"/><path d="M1 8 L6 10 L6 16 L1 13 Z" fill="#159a15" stroke="#0b5e0b" stroke-width=".9"/><path d="M6 10 L13 7 L13 13 L6 16 Z" fill="#25c025" stroke="#0b5e0b" stroke-width=".9"/></svg><svg class="s" style="left:24px;top:465px" width="20" height="19" viewBox="0 0 20 19"><path d="M2 4 L6 2 L16 2 L12 4 Z" fill="#fbe88a" stroke="#6e5200" stroke-width=".9"/><path d="M2 4 L12 4 L12 18 L2 18 Z" fill="#f5cf2e" stroke="#6e5200" stroke-width=".9"/><path d="M12 4 L16 2 L16 16 L12 18 Z" fill="#dcae1a" stroke="#6e5200" stroke-width=".9"/><rect x="4" y="6.5" width="6" height="9" fill="#25c025" stroke="#0b5e0b" stroke-width=".8"/><rect x="4.5" y="7" width="3" height="3.5" fill="#fff"/></svg><svg class="s" style="left:24px;top:487px" width="20" height="19" viewBox="0 0 20 19"><rect x="1" y="1" width="17" height="12" fill="#dfe8f0" stroke="#3a78b8"/><path d="M1 5 C6 3 12 7 18 5 M1 9 C6 7 12 11 18 9" stroke="#3a78b8" fill="none"/><path d="M5 18 V13 H9 V18 Z M11 18 V11 H15 V18 Z" fill="#2ec42e" stroke="#1a7a1a"/><path d="M1 18 H9" stroke="#f0c020" stroke-width="2"/></svg><svg class="s" style="left:1289px;top:912px" width="20" height="15" viewBox="0 0 20 15"><path d="M2 6 L12 1 L18 5 L18 9 L8 14 L2 10 Z" fill="#fff" stroke="#444"/><path d="M2 6 L8 10 L18 5 M8 10 V14" fill="none" stroke="#444"/><rect x="8" y="4" width="4" height="3" fill="none" stroke="#444"/></svg><svg class="s" style="left:1317px;top:918px" width="10" height="9" viewBox="0 0 10 9"><g fill="#aaa"><rect x="7" y="0" width="2" height="2"/><rect x="4" y="3" width="2" height="2"/><rect x="7" y="3" width="2" height="2"/><rect x="1" y="6" width="2" height="2"/><rect x="4" y="6" width="2" height="2"/><rect x="7" y="6" width="2" height="2"/></g></svg>
</body></html>
